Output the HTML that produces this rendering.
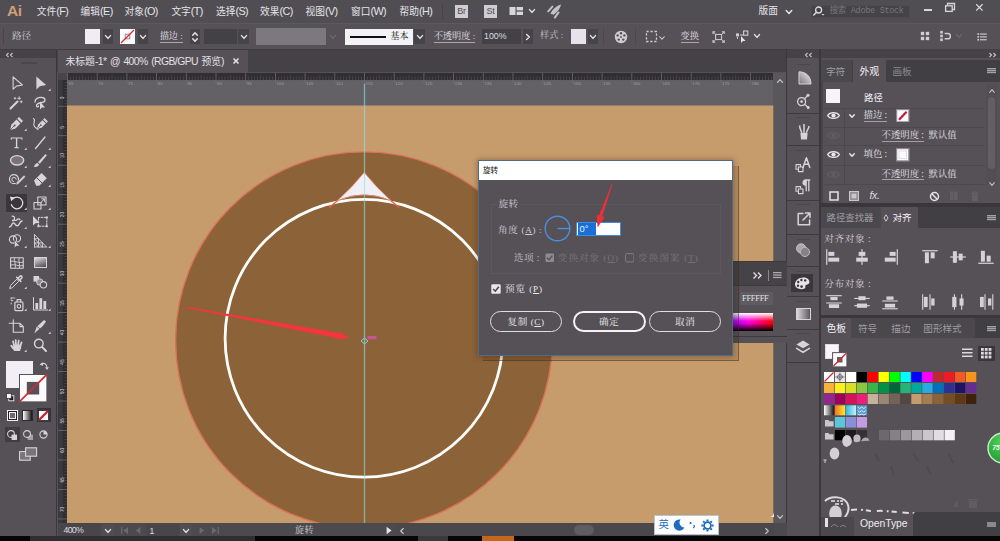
<!DOCTYPE html>
<html lang="zh"><head><meta charset="utf-8"><title>Adobe Illustrator - 旋转</title>
<style>
html,body{margin:0;padding:0;background:#000;}
#app{position:relative;width:1000px;height:541px;overflow:hidden;background:#565157;font-family:"Liberation Sans","Noto Sans CJK SC",sans-serif;}
#app div,#app svg{position:absolute;box-sizing:border-box;}
#app .t{white-space:nowrap;line-height:1.2;}
#app .ss{font-family:"Liberation Sans","Noto Sans CJK SC",sans-serif;}
#app .sf{font-family:"Liberation Serif","Noto Serif CJK SC",serif;}
</style></head>
<body>
<div id="app">
<div style="left:0px;top:0px;width:1000px;height:24px;background:#504e53;"></div>
<div style="left:0px;top:23px;width:1000px;height:26.2px;background:#565157;border-top:1px solid #5b595e;"></div>
<div style="left:0px;top:49.3px;width:1000px;height:23.2px;background:#444246;"></div>
<div style="left:0px;top:49.3px;width:1000px;height:0.8px;background:#3e3c40;"></div>
<div style="left:0px;top:50px;width:57px;height:486px;background:#565157;"></div>
<div style="left:0px;top:50px;width:57px;height:8px;background:#454348;"></div>
<div style="left:56.3px;top:50px;width:1.2px;height:486px;background:#3a383c;"></div>
<div style="left:57.7px;top:50px;width:190px;height:22.5px;background:#565157;"></div>
<div style="left:57.5px;top:72.5px;width:715px;height:7.3px;background:#302e32;"></div>
<div style="left:66.6px;top:79.8px;width:707px;height:443px;background:#636166;"></div>
<div style="left:57.5px;top:72.5px;width:9.1px;height:450.5px;background:#3b393d;"></div>
<div style="left:62.6px;top:79.8px;width:4px;height:443px;background:#2e2c30;"></div>
<div style="left:57.5px;top:72.5px;width:9.1px;height:7.3px;background:#47454a;"></div>
<div style="left:773.3px;top:72.5px;width:13.5px;height:463.5px;background:#59575c;"></div>
<div style="left:787px;top:49.3px;width:32px;height:486.7px;background:#565157;"></div>
<div style="left:786px;top:49.3px;width:1px;height:486.7px;background:#3a383c;"></div>
<div style="left:787px;top:49.3px;width:32px;height:8.7px;background:#454348;"></div>
<div style="left:819px;top:49.3px;width:2px;height:486.7px;background:#3a383c;"></div>
<div style="left:821px;top:49.3px;width:179px;height:486.7px;background:#565157;"></div>
<div style="left:821px;top:49.3px;width:179px;height:8.7px;background:#454348;"></div>
<div style="left:58px;top:523px;width:729px;height:13px;background:#565157;"></div>
<div style="left:0px;top:536px;width:1000px;height:5px;background:#0a0a0a;"></div>
<svg style="left:67px;top:83px;" width="707" height="440" viewBox="0 0 707 440"><rect x="-0.4" y="22.5" width="706.7" height="417.5" fill="#c79c6d"/><circle cx="297" cy="257.3" r="188.4" fill="#8c6238" stroke="#dc7256" stroke-width="1.4"/><circle cx="297" cy="255.3" r="138.9" fill="none" stroke="#fffefb" stroke-width="2.8"/><path d="M297.2 89.5 Q285.0 104.7 270.4 117.7 Q297.2 106.0 324.0 117.7 Q309.4 104.7 297.2 89.5Z" fill="#f1eff6" stroke="#e98a72" stroke-width="0.9"/><path d="M270.4 117.7 L262.2 124.5 M324.0 117.7 L332.2 124.5" stroke="#e8604a" stroke-width="1.4"/><line x1="297.5" y1="0" x2="297.5" y2="440" stroke="#8fe3e6" stroke-width="1.3" opacity="0.6"/><path d="M118.6 223.6 L271.5 249.8 L271.75 248.5 L282.8 254.6 L270.25 256.5 L270.5 255.2 L118.4 224.7Z" fill="#f2363b"/><path d="M294 258 l3.5 -3 l3.5 3 l-3.5 3z" fill="none" stroke="#7fd6d8" stroke-width="1"/><rect x="300.5" y="253" width="9" height="3.4" fill="#e052b8" opacity="0.7"/></svg>
<div class="t ss" style="left:7px;top:0.4px;font-size:15.5px;color:#cf9f7a;font-weight:bold;letter-spacing:-0.5px;line-height:21px;">Ai</div>
<div class="t ss" style="left:36.8px;top:4px;font-size:9.7px;color:#e6e4e9;line-height:14px;">文件<span style="font-size:10.8px;letter-spacing:-0.55px;">(F)</span></div>
<div class="t ss" style="left:80.6px;top:4px;font-size:9.7px;color:#e6e4e9;line-height:14px;">编辑<span style="font-size:10.8px;letter-spacing:-0.55px;">(E)</span></div>
<div class="t ss" style="left:124.5px;top:4px;font-size:9.7px;color:#e6e4e9;line-height:14px;">对象<span style="font-size:10.8px;letter-spacing:-0.55px;">(O)</span></div>
<div class="t ss" style="left:171.4px;top:4px;font-size:9.7px;color:#e6e4e9;line-height:14px;">文字<span style="font-size:10.8px;letter-spacing:-0.55px;">(T)</span></div>
<div class="t ss" style="left:216px;top:4px;font-size:9.7px;color:#e6e4e9;line-height:14px;">选择<span style="font-size:10.8px;letter-spacing:-0.55px;">(S)</span></div>
<div class="t ss" style="left:260px;top:4px;font-size:9.7px;color:#e6e4e9;line-height:14px;">效果<span style="font-size:10.8px;letter-spacing:-0.55px;">(C)</span></div>
<div class="t ss" style="left:305.5px;top:4px;font-size:9.7px;color:#e6e4e9;line-height:14px;">视图<span style="font-size:10.8px;letter-spacing:-0.55px;">(V)</span></div>
<div class="t ss" style="left:351px;top:4px;font-size:9.7px;color:#e6e4e9;line-height:14px;">窗口<span style="font-size:10.8px;letter-spacing:-0.55px;">(W)</span></div>
<div class="t ss" style="left:399.5px;top:4px;font-size:9.7px;color:#e6e4e9;line-height:14px;">帮助<span style="font-size:10.8px;letter-spacing:-0.55px;">(H)</span></div>
<div style="left:442px;top:4px;width:1px;height:15px;background:#454348;"></div>
<div style="left:455px;top:5px;width:13px;height:13px;background:#cfcdd2;color:#504e53;font-size:9px;text-align:center;line-height:13.5px;letter-spacing:-0.2px;">Br</div>
<div style="left:484px;top:5px;width:13px;height:13px;background:#cfcdd2;color:#504e53;font-size:9px;text-align:center;line-height:13.5px;letter-spacing:-0.2px;">St</div>
<svg style="left:508.5px;top:5.5px;" width="15" height="10" viewBox="0 0 15 10"><rect x="0.5" y="1" width="6" height="8" fill="#d8d6db"/><rect x="7.6" y="1" width="6.4" height="3.4" fill="#d8d6db"/><rect x="7.6" y="5.6" width="6.4" height="3.4" fill="#d8d6db"/></svg>
<svg style="left:523.7px;top:2.6999999999999993px" width="16" height="16" viewBox="-8 -8 16 16"><path d="M-2.5 -1.4 L0 1.4 L2.5 -1.4" fill="none" stroke="#e6e6e6" stroke-width="1.4" stroke-linecap="round" stroke-linejoin="round"/></svg>
<svg style="left:546px;top:3px;" width="18" height="17" viewBox="0 0 18 17"><path d="M15.2 1.4 C12 2 8.6 4.4 6.2 7.6 L4.4 10.8 L7.6 11.8 C10.6 9.6 13.6 6.4 15.2 1.4Z" fill="#c3c1c6"/><path d="M6.4 3.6 L2.2 8.4 M12.6 9.4 L8.8 14.6" stroke="#c3c1c6" stroke-width="1.9" stroke-linecap="round"/></svg>
<div class="t ss" style="left:758.5px;top:4px;font-size:9.7px;color:#e6e4e9;line-height:14px;">版面</div>
<svg style="left:780.5px;top:4px" width="16" height="16" viewBox="-8 -8 16 16"><path d="M-2.75 -1.5 L0 1.5 L2.75 -1.5" fill="none" stroke="#e6e6e6" stroke-width="1.4" stroke-linecap="round" stroke-linejoin="round"/></svg>
<div style="left:810.5px;top:4.5px;width:99.5px;height:13.5px;background:#454348;border:1px solid #4d4b50;"></div>
<svg style="left:812px;top:5px;" width="14" height="12" viewBox="0 0 14 12"><circle cx="6.6" cy="5" r="3" fill="none" stroke="#dcdce0" stroke-width="1.3"/><path d="M4.4 7.3 L1.8 10" stroke="#dcdce0" stroke-width="1.5" stroke-linecap="round"/><path d="M9.5 9 l3 0 l-1.5 1.6z" fill="#dcdce0"/></svg>
<div class="t ss" style="left:829.5px;top:6px;font-size:8.6px;color:#78767b;font-family:'Liberation Mono','Noto Sans CJK SC',monospace;letter-spacing:-0.35px;">搜索 Adobe Stock</div>
<div style="left:924px;top:9px;width:8px;height:2px;background:#d8d6db;"></div>
<svg style="left:944px;top:2px;" width="12" height="12" viewBox="0 0 12 12"><path d="M3.5 3.5 V1.5 H10.5 V7.5 H8.5" fill="none" stroke="#d8d6db" stroke-width="1.3"/><rect x="1.6" y="3.8" width="6.6" height="5.6" fill="none" stroke="#d8d6db" stroke-width="1.3"/></svg>
<svg style="left:974px;top:2px;" width="11" height="11" viewBox="0 0 11 11"><path d="M2.2 2.2 L8.6 8.6 M8.6 2.2 L2.2 8.6" stroke="#d8d6db" stroke-width="1.3"/></svg>
<div style="left:3px;top:28px;width:1px;height:16px;background:#47454a;"></div>
<div class="t sf" style="left:12px;top:30px;font-size:9.6px;color:#cccacf;--sw:24;">路径</div>
<div style="left:85px;top:29px;width:15px;height:15px;background:#efecf3;"></div>
<div style="left:103px;top:29px;width:10px;height:15px;background:#464449;"></div>
<svg style="left:100px;top:29px" width="16" height="16" viewBox="-8 -8 16 16"><path d="M-2.5 -1.4 L0 1.4 L2.5 -1.4" fill="none" stroke="#e6e6e6" stroke-width="1.4" stroke-linecap="round" stroke-linejoin="round"/></svg>
<svg style="left:119.5px;top:29px;" width="15" height="15" viewBox="0 0 15 15"><rect width="15" height="15" fill="#fbfafc"/><rect x="5.2" y="5.2" width="4.6" height="4.6" fill="none" stroke="#8a7f88" stroke-width="0.9"/><path d="M1 14 L14 1" stroke="#d8282c" stroke-width="1.3"/></svg>
<div style="left:138px;top:29px;width:10px;height:15px;background:#464449;"></div>
<svg style="left:135px;top:29px" width="16" height="16" viewBox="-8 -8 16 16"><path d="M-2.5 -1.4 L0 1.4 L2.5 -1.4" fill="none" stroke="#e6e6e6" stroke-width="1.4" stroke-linecap="round" stroke-linejoin="round"/></svg>
<div class="t sf" style="left:159.7px;top:30.5px;font-size:9.2px;color:#e2e0e5;--sw:30;border-bottom:1px solid #a9a7ac;line-height:11px;">描边 :</div>
<div style="left:190px;top:29px;width:10px;height:15px;background:#464449;"></div>
<svg style="left:187px;top:25.5px" width="16" height="16" viewBox="-8 -8 16 16"><path d="M-2.3 1.3 L0 -1.3 L2.3 1.3" fill="none" stroke="#e6e6e6" stroke-width="1.4" stroke-linecap="round" stroke-linejoin="round"/></svg>
<svg style="left:187px;top:32px" width="16" height="16" viewBox="-8 -8 16 16"><path d="M-2.3 -1.3 L0 1.3 L2.3 -1.3" fill="none" stroke="#e6e6e6" stroke-width="1.4" stroke-linecap="round" stroke-linejoin="round"/></svg>
<div style="left:204px;top:29px;width:32.5px;height:15px;background:#434146;"></div>
<div style="left:238px;top:29px;width:11px;height:15px;background:#464449;"></div>
<svg style="left:235.5px;top:29px" width="16" height="16" viewBox="-8 -8 16 16"><path d="M-2.5 -1.4 L0 1.4 L2.5 -1.4" fill="none" stroke="#e6e6e6" stroke-width="1.4" stroke-linecap="round" stroke-linejoin="round"/></svg>
<div style="left:256px;top:28px;width:70px;height:17px;background:#7b797f;"></div>
<svg style="left:325px;top:29px" width="16" height="16" viewBox="-8 -8 16 16"><path d="M-2.5 -1.4 L0 1.4 L2.5 -1.4" fill="none" stroke="#6a686d" stroke-width="1.4" stroke-linecap="round" stroke-linejoin="round"/></svg>
<div style="left:345px;top:28.5px;width:68px;height:16px;background:#f3f2f5;"></div>
<div style="left:350px;top:36.3px;width:36px;height:2px;background:#111;"></div>
<div class="t sf" style="left:390.5px;top:31px;font-size:9px;color:#111;--sw:25;">基本</div>
<div style="left:414px;top:29px;width:11px;height:15px;background:#464449;"></div>
<svg style="left:412px;top:29px" width="16" height="16" viewBox="-8 -8 16 16"><path d="M-2.5 -1.4 L0 1.4 L2.5 -1.4" fill="none" stroke="#e6e6e6" stroke-width="1.4" stroke-linecap="round" stroke-linejoin="round"/></svg>
<div class="t sf" style="left:433.7px;top:30.5px;font-size:9.2px;color:#e2e0e5;--sw:30;border-bottom:1px solid #a9a7ac;line-height:11px;">不透明度 :</div>
<div style="left:482px;top:29px;width:39px;height:15px;background:#434146;"></div>
<div class="t ss" style="left:484px;top:30.5px;font-size:8.8px;color:#dedde1;">100%</div>
<div style="left:523px;top:29px;width:10px;height:15px;background:#464449;"></div>
<svg style="left:520px;top:29px" width="16" height="16" viewBox="-8 -8 16 16"><path d="M-1.4 -2.5 L1.4 0 L-1.4 2.5" fill="none" stroke="#e6e6e6" stroke-width="1.4" stroke-linecap="round" stroke-linejoin="round"/></svg>
<div class="t sf" style="left:540px;top:30px;font-size:9.2px;color:#c3c1c6;--sw:15;">样式 :</div>
<div style="left:571px;top:29px;width:15px;height:15px;background:#e7e3ec;"></div>
<div style="left:588px;top:29px;width:10px;height:15px;background:#464449;"></div>
<svg style="left:585px;top:29px" width="16" height="16" viewBox="-8 -8 16 16"><path d="M-2.5 -1.4 L0 1.4 L2.5 -1.4" fill="none" stroke="#e6e6e6" stroke-width="1.4" stroke-linecap="round" stroke-linejoin="round"/></svg>
<div style="left:603px;top:28px;width:1px;height:17px;background:#4b494e;"></div>
<svg style="left:613px;top:29px;" width="16" height="16" viewBox="0 0 16 16"><circle cx="8" cy="8" r="6.2" fill="#cfcdd2"/><g fill="#565157"><circle cx="8" cy="4.2" r="1.2"/><circle cx="11.4" cy="6.4" r="1.2"/><circle cx="10.3" cy="10.6" r="1.2"/><circle cx="5.7" cy="10.6" r="1.2"/><circle cx="4.6" cy="6.4" r="1.2"/><circle cx="8" cy="8" r="0.9"/></g></svg>
<div style="left:635px;top:28px;width:1px;height:17px;background:#4b494e;"></div>
<svg style="left:645px;top:30px;" width="14" height="14" viewBox="0 0 14 14"><rect x="1.5" y="1.5" width="10" height="10" fill="none" stroke="#cfcdd2" stroke-width="1.3" stroke-dasharray="2.2 1.8"/></svg>
<svg style="left:653.5px;top:30px" width="16" height="16" viewBox="-8 -8 16 16"><path d="M-2.25 -1.25 L0 1.25 L2.25 -1.25" fill="none" stroke="#cfcdd2" stroke-width="1.1" stroke-linecap="round" stroke-linejoin="round"/></svg>
<div class="t sf" style="left:680.5px;top:31px;font-size:9.2px;color:#e2e0e5;--sw:30;border-bottom:1px solid #a9a7ac;line-height:11px;">变换</div>
<svg style="left:711.5px;top:30.5px;" width="13.2" height="12" viewBox="0 0 15 14"><rect x="4" y="4" width="7" height="6" fill="none" stroke="#cfcdd2" stroke-width="1.2"/><path d="M1 3.5 V1 H3.5 M11.5 1 H14 V3.5 M14 10.5 V13 H11.5 M3.5 13 H1 V10.5" fill="none" stroke="#cfcdd2" stroke-width="1.3"/><path d="M1 1 L4 4 M14 1 L11 4 M14 13 L11 10 M1 13 L4 10" stroke="#cfcdd2" stroke-width="1"/></svg>
<svg style="left:735px;top:30px;" width="14" height="14" viewBox="0 0 14 14"><rect x="1" y="3.4" width="3" height="3" fill="#cfcdd2"/><rect x="8.6" y="1" width="4.2" height="4.2" fill="none" stroke="#cfcdd2" stroke-width="1.1"/><path d="M5 5 H8.5 M2.5 7 V9" stroke="#cfcdd2" stroke-width="1"/><path d="M6 6 L6 13 L8 11 L10.6 11Z" fill="#e4e2e7"/></svg>
<svg style="left:749px;top:28px" width="16" height="16" viewBox="-8 -8 16 16"><path d="M-2.5 -1.4 L0 1.4 L2.5 -1.4" fill="none" stroke="#e6e6e6" stroke-width="1.4" stroke-linecap="round" stroke-linejoin="round"/></svg>
<svg style="left:919.6px;top:31.2px;" width="10" height="10" viewBox="0 0 12 12"><g fill="#cfcdd2"><rect x="1" y="1" width="4" height="4"/><rect x="7" y="1" width="4" height="4"/><rect x="1" y="7" width="4" height="4"/><rect x="7" y="7" width="4" height="4"/></g></svg>
<svg style="left:938.6px;top:30px;" width="13" height="12" viewBox="0 0 14 13.6"><g fill="#cfcdd2"><rect x="1" y="1" width="3" height="3"/><rect x="1" y="5.3" width="3" height="3"/><rect x="1" y="9.6" width="3" height="3"/></g><path d="M6 4 H9.5 A3 3 0 0 1 9.5 10 H6" fill="none" stroke="#cfcdd2" stroke-width="1.6"/></svg>
<svg style="left:950.8px;top:28px" width="16" height="16" viewBox="-8 -8 16 16"><path d="M-2.5 -1.4 L0 1.4 L2.5 -1.4" fill="none" stroke="#6a686d" stroke-width="1.4" stroke-linecap="round" stroke-linejoin="round"/></svg>
<svg style="left:976.8px;top:32px;" width="10.6" height="9.8" viewBox="0 0 13 12"><g fill="#cfcdd2"><rect x="0.5" y="1.5" width="2" height="2"/><rect x="0.5" y="5" width="2" height="2"/><rect x="0.5" y="8.5" width="2" height="2"/><rect x="3.6" y="1.8" width="8.4" height="1.4"/><rect x="3.6" y="5.3" width="8.4" height="1.4"/><rect x="3.6" y="8.8" width="8.4" height="1.4"/></g></svg>
<div class="t ss" style="left:65.5px;top:55.3px;font-size:9.8px;color:#e2e0e5;line-height:14px;">未标题<span style="font-size:10.4px;letter-spacing:-0.58px;word-spacing:1.2px;">-1* @ 400% (RGB/GPU </span>预览<span style="font-size:10.4px;letter-spacing:-0.58px;word-spacing:1.2px;">)</span></div>
<svg style="left:232px;top:57px;" width="8" height="8" viewBox="0 0 8 8"><path d="M1.5 1.5 L6.5 6.5 M6.5 1.5 L1.5 6.5" stroke="#e6e4e9" stroke-width="1.5"/></svg>
<svg style="left:3.5px;top:51.8px;" width="12" height="6" viewBox="0 0 12 6"><path d="M4.5 1 L2.5 3 L4.5 5 M8.5 1 L6.5 3 L8.5 5" fill="none" stroke="#c8c6cb" stroke-width="1.1"/></svg>
<div style="left:21px;top:62px;width:16px;height:2px;background:#49474c;"></div>
<svg style="left:803px;top:51.5px;" width="12" height="6" viewBox="0 0 12 6"><path d="M4.5 1 L2.5 3 L4.5 5 M8.5 1 L6.5 3 L8.5 5" fill="none" stroke="#c8c6cb" stroke-width="1.1"/></svg>
<svg style="left:986px;top:51.5px;" width="12" height="6" viewBox="0 0 12 6"><path d="M3.5 1 L5.5 3 L3.5 5 M7.5 1 L9.5 3 L7.5 5" fill="none" stroke="#c8c6cb" stroke-width="1.1"/></svg>
<div style="left:5.5px;top:194px;width:21px;height:18px;background:#39373b;border-radius:1px;"></div>
<svg style="left:5.0px;top:72.5px" width="22" height="22" viewBox="-11.0 -11.0 22 22" fill="none" stroke="#d6d4d9" stroke-width="1.2" stroke-linejoin="round" stroke-linecap="round"><path d="M-2.9 -7.2 L-2.9 5.2 L0.4 2.1 L6.4 1Z" stroke-width="1.1"/></svg>
<svg style="left:29.0px;top:72.5px" width="22" height="22" viewBox="-11.0 -11.0 22 22" fill="none" stroke="#d6d4d9" stroke-width="1.2" stroke-linejoin="round" stroke-linecap="round"><path d="M-3.6 -7.6 L-3.6 5.6 L-0.2 2.2 L6.2 1Z" fill="#d6d4d9" stroke="none"/><path d="M10.6 4.6 V6.9 H8.3Z" fill="#d6d4d9" stroke="none"/></svg>
<svg style="left:5.0px;top:91.5px" width="22" height="22" viewBox="-11.0 -11.0 22 22" fill="none" stroke="#d6d4d9" stroke-width="1.2" stroke-linejoin="round" stroke-linecap="round"><path d="M-5.5 5.5 L1.5 -1.5" stroke-width="2"/><path d="M3.2 -6.2 v3 M1.7 -4.7 h3 M5.2 -2.2 v2 M4.2 -1.2 h2 M-1 -5.5 v1.6 M-1.8 -4.7 h1.6" stroke-width="0.9"/></svg>
<svg style="left:29.0px;top:91.5px" width="22" height="22" viewBox="-11.0 -11.0 22 22" fill="none" stroke="#d6d4d9" stroke-width="1.2" stroke-linejoin="round" stroke-linecap="round"><path d="M-5 -1 C-5 -5 -1 -6 2 -5.5 C6 -5 6 -1 2 -0.5 C-1 0 -4 1 -3.5 3 C-3 4.5 -1.5 4 -1.5 2.8" stroke-width="1.3"/><path d="M0 -1.5 L0 6.5 L2 4.6 L5 4.6Z" fill="#d6d4d9" stroke="none"/></svg>
<svg style="left:5.0px;top:112.5px" width="22" height="22" viewBox="-11.0 -11.0 22 22" fill="none" stroke="#d6d4d9" stroke-width="1.2" stroke-linejoin="round" stroke-linecap="round"><path d="M-6 6 L-4.5 0.5 L0.5 -4.5 L4.5 -0.5 L-0.5 4.5Z" fill="#d6d4d9" stroke="none"/><path d="M1.3 -5.3 L3 -7 L7 -3 L5.3 -1.3Z" fill="#d6d4d9" stroke="none"/><circle cx="-1.4" cy="1.4" r="1" fill="#565157" stroke="none"/><path d="M-6 6 L-2 2" stroke="#565157" stroke-width="0.8"/><path d="M10.6 4.6 V6.9 H8.3Z" fill="#d6d4d9" stroke="none"/></svg>
<svg style="left:29.0px;top:112.5px" width="22" height="22" viewBox="-11.0 -11.0 22 22" fill="none" stroke="#d6d4d9" stroke-width="1.2" stroke-linejoin="round" stroke-linecap="round"><g transform="translate(2 0) scale(0.85)"><path d="M-6 6 L-4.5 0.5 L0.5 -4.5 L4.5 -0.5 L-0.5 4.5Z" fill="#d6d4d9" stroke="none"/><path d="M1.3 -5.3 L3 -7 L7 -3 L5.3 -1.3Z" fill="#d6d4d9" stroke="none"/><circle cx="-1.4" cy="1.4" r="1" fill="#565157" stroke="none"/><path d="M-6 6 L-2 2" stroke="#565157" stroke-width="0.8"/></g><path d="M-6.5 -5.5 C-3.5 -4 -8 0 -5.5 2.5 C-4.5 4 -3 4.5 -2 5.5" stroke-width="1.1"/></svg>
<svg style="left:5.0px;top:131.5px" width="22" height="22" viewBox="-11.0 -11.0 22 22" fill="none" stroke="#d6d4d9" stroke-width="1.2" stroke-linejoin="round" stroke-linecap="round"><path d="M-5.2 -5.6 H6.4 V-3.2 H5.6 L5.2 -4.5 H1.3 V4 L3 4.4 V5.2 H-1.8 V4.4 L-0.1 4 V-4.5 H-4 L-4.4 -3.2 H-5.2Z" fill="#d6d4d9" stroke="none"/><path d="M10.6 4.6 V6.9 H8.3Z" fill="#d6d4d9" stroke="none"/></svg>
<svg style="left:29.0px;top:131.5px" width="22" height="22" viewBox="-11.0 -11.0 22 22" fill="none" stroke="#d6d4d9" stroke-width="1.2" stroke-linejoin="round" stroke-linecap="round"><path d="M-4.5 5.5 L5 -6" stroke-width="1.3"/><path d="M10.6 4.6 V6.9 H8.3Z" fill="#d6d4d9" stroke="none"/></svg>
<svg style="left:5.0px;top:150.0px" width="22" height="22" viewBox="-11.0 -11.0 22 22" fill="none" stroke="#d6d4d9" stroke-width="1.2" stroke-linejoin="round" stroke-linecap="round"><ellipse cx="1.1" cy="-0.7" rx="6.6" ry="4.7" fill="#7d7176" stroke="#d6d4d9" stroke-width="1.4"/><path d="M10.6 4.6 V6.9 H8.3Z" fill="#d6d4d9" stroke="none"/></svg>
<svg style="left:29.0px;top:150.0px" width="22" height="22" viewBox="-11.0 -11.0 22 22" fill="none" stroke="#d6d4d9" stroke-width="1.2" stroke-linejoin="round" stroke-linecap="round"><path d="M5.5 -7 L6.8 -5.8 L-0.2 2.8 L-2 1.2Z" fill="#d6d4d9" stroke="none"/><path d="M-2.6 2 L-0.9 3.6 C-1.5 6 -4.5 6.3 -6.5 5.6 C-5 4.8 -5.2 2.5 -2.6 2Z" fill="#d6d4d9" stroke="none"/><path d="M10.6 4.6 V6.9 H8.3Z" fill="#d6d4d9" stroke="none"/></svg>
<svg style="left:5.0px;top:169.0px" width="22" height="22" viewBox="-11.0 -11.0 22 22" fill="none" stroke="#d6d4d9" stroke-width="1.2" stroke-linejoin="round" stroke-linecap="round"><circle cx="-2" cy="-0.8" r="4.5" stroke-width="1.2"/><path d="M-2.4 1.6 A2.2 2.2 0 1 1 0.2 -0.8" stroke-width="1"/><path d="M-0.2 5 L0.8 2.4 L8 -4.8 L9.6 -3.2 L2.4 4Z" fill="#d6d4d9" stroke="#565157" stroke-width="0.5"/><path d="M10.6 4.6 V6.9 H8.3Z" fill="#d6d4d9" stroke="none"/></svg>
<svg style="left:29.0px;top:169.0px" width="22" height="22" viewBox="-11.0 -11.0 22 22" fill="none" stroke="#d6d4d9" stroke-width="1.2" stroke-linejoin="round" stroke-linecap="round"><path d="M-6 0.6 L1.6 -7 L6.8 -1.8 L-0.8 5.8 L-3.8 5.8Z" fill="#d6d4d9" stroke="none"/><path d="M-3.2 -2.2 L2 3" stroke="#565157" stroke-width="1"/><path d="M10.6 4.6 V6.9 H8.3Z" fill="#d6d4d9" stroke="none"/></svg>
<svg style="left:5.0px;top:192.3px" width="22" height="22" viewBox="-11.0 -11.0 22 22" fill="none" stroke="#d6d4d9" stroke-width="1.2" stroke-linejoin="round" stroke-linecap="round"><path d="M-3.4 -3.9 A5.8 5.8 0 1 1 -4.6 1.7" stroke-width="1.25" stroke="#dedce1"/><path d="M-6 -6.4 L-1.4 -5.4 L-4.8 -1.8Z" fill="#dedce1" stroke="none"/><path d="M10.6 4.6 V6.9 H8.3Z" fill="#d6d4d9" stroke="none"/></svg>
<svg style="left:29.0px;top:192.3px" width="22" height="22" viewBox="-11.0 -11.0 22 22" fill="none" stroke="#d6d4d9" stroke-width="1.2" stroke-linejoin="round" stroke-linecap="round"><rect x="-6" y="-0.5" width="7" height="6.5" stroke-width="1.1"/><rect x="-2.2" y="-6" width="8.2" height="8" stroke-width="1.1"/><path d="M0.5 0 L4.2 -4 M4.4 -1.6 V-4.2 H1.8" stroke-width="1"/><path d="M10.6 4.6 V6.9 H8.3Z" fill="#d6d4d9" stroke="none"/></svg>
<svg style="left:5.0px;top:210.5px" width="22" height="22" viewBox="-11.0 -11.0 22 22" fill="none" stroke="#d6d4d9" stroke-width="1.2" stroke-linejoin="round" stroke-linecap="round"><path d="M-6.5 5 C-4 5 -4.5 1 -2.5 1 C-0.5 1 -1 3.8 1.2 3.8 C3.6 3.8 3 -0.5 6 -1" stroke-width="1.4"/><path d="M-3.8 -5.8 C-2 -6 -1 -4.5 -1.6 -3 C-2.2 -1.5 -0.5 -1 0.8 -2.2 C2 -3.3 3.2 -3.4 4 -2.2" stroke-width="1.2"/><circle cx="-3" cy="-1.5" r="1" fill="#d6d4d9" stroke="none"/><path d="M10.6 4.6 V6.9 H8.3Z" fill="#d6d4d9" stroke="none"/></svg>
<svg style="left:29.0px;top:210.5px" width="22" height="22" viewBox="-11.0 -11.0 22 22" fill="none" stroke="#d6d4d9" stroke-width="1.2" stroke-linejoin="round" stroke-linecap="round"><rect x="-1.6" y="-4.6" width="8.4" height="8.8" stroke-width="1" stroke-dasharray="1.6 1.3"/><g fill="#d6d4d9" stroke="none"><rect x="5.8" y="-5.6" width="2" height="2"/><rect x="-2.6" y="3.2" width="2" height="2"/><rect x="5.8" y="3.2" width="2" height="2"/><path d="M-7 -6 L-7 3.6 L-4.4 1.2 L-0.4 0.8Z"/></g></svg>
<svg style="left:5.0px;top:230.4px" width="22" height="22" viewBox="-11.0 -11.0 22 22" fill="none" stroke="#d6d4d9" stroke-width="1.2" stroke-linejoin="round" stroke-linecap="round"><circle cx="-3" cy="-1.5" r="3.6" stroke-width="1.1"/><circle cx="1" cy="-2.6" r="3.6" stroke-width="1.1"/><path d="M-1.5 -0.5 L-1.5 6.8 L0.5 5 L3.6 5Z" fill="#d6d4d9" stroke="#565157" stroke-width="0.5"/><path d="M10.6 4.6 V6.9 H8.3Z" fill="#d6d4d9" stroke="none"/></svg>
<svg style="left:29.0px;top:230.4px" width="22" height="22" viewBox="-11.0 -11.0 22 22" fill="none" stroke="#d6d4d9" stroke-width="1.2" stroke-linejoin="round" stroke-linecap="round"><path d="M-5.5 -6.5 V6 M-5.5 -6.5 L6.5 6 M-5.5 6 H6.5 M-5.5 -2.3 L2.4 6 M-5.5 1.8 L-1.6 6 M-1.5 -2.3 V6 M2.4 1.8 V6 M-5.5 1.9 H2.4 M-5.5 -2.3 H-1.5" stroke-width="0.9"/><path d="M10.6 4.6 V6.9 H8.3Z" fill="#d6d4d9" stroke="none"/></svg>
<svg style="left:5.0px;top:252.5px" width="22" height="22" viewBox="-11.0 -11.0 22 22" fill="none" stroke="#d6d4d9" stroke-width="1.2" stroke-linejoin="round" stroke-linecap="round"><rect x="-5.4" y="-6.2" width="12.6" height="10.4" stroke-width="1.1"/><path d="M-5.4 -2.6 C-2 -4 3 0 7.2 -2 M-5.4 1 C-2 -0.6 2.5 3 7.2 1.6 M-1.4 -6.2 C-3 -3 1 0.6 -1 4.2 M3.2 -6.2 C1.6 -3 4.8 0.6 3.4 4.2" stroke-width="0.9"/></svg>
<div style="left:33.8px;top:257.2px;width:13.3px;height:10.6px;border:1px solid #d6d4d9;background:linear-gradient(160deg,#dcdadf,#4a474c);"></div>
<svg style="left:5.0px;top:271.4px" width="22" height="22" viewBox="-11.0 -11.0 22 22" fill="none" stroke="#d6d4d9" stroke-width="1.2" stroke-linejoin="round" stroke-linecap="round"><path d="M-6.2 6.2 L-5.4 3.4 L0.8 -2.8 L2.8 -0.8 L-3.4 5.4Z" stroke-width="1"/><path d="M0.6 -4.8 L4.8 -0.6 M1.8 -3.6 L4 -5.8 C5 -6.8 6.8 -5 5.8 -4 L3.6 -1.8" stroke-width="1.5"/><path d="M10.6 4.6 V6.9 H8.3Z" fill="#d6d4d9" stroke="none"/></svg>
<svg style="left:29.0px;top:271.4px" width="22" height="22" viewBox="-11.0 -11.0 22 22" fill="none" stroke="#d6d4d9" stroke-width="1.2" stroke-linejoin="round" stroke-linecap="round"><rect x="-6.5" y="-6" width="5.6" height="5.6" fill="#d6d4d9" stroke="none"/><circle cx="-0.2" cy="0" r="3.2" fill="#8f8d92" stroke="#d6d4d9" stroke-width="0.9"/><circle cx="3.4" cy="2.8" r="3.2" fill="#565157" stroke="#d6d4d9" stroke-width="1.1"/></svg>
<svg style="left:5.0px;top:293.4px" width="22" height="22" viewBox="-11.0 -11.0 22 22" fill="none" stroke="#d6d4d9" stroke-width="1.2" stroke-linejoin="round" stroke-linecap="round"><g transform="translate(1.4 0)"><rect x="-2.5" y="-2" width="8" height="8.6" rx="0.8" stroke-width="1.2"/><circle cx="1.5" cy="2.3" r="1.8" stroke-width="1.1"/><path d="M-0.3 -2 V-4.4 H3.4 V-2" stroke-width="1.2"/><path d="M-6.2 -6 h1.6 M-6.2 -3.4 h1.6 M-3.8 -6 h1.2 M-6.2 -6 v1.2 M-6.2 -1 v1" stroke-width="0.9"/></g><path d="M10.6 4.6 V6.9 H8.3Z" fill="#d6d4d9" stroke="none"/></svg>
<svg style="left:29.0px;top:293.4px" width="22" height="22" viewBox="-11.0 -11.0 22 22" fill="none" stroke="#d6d4d9" stroke-width="1.2" stroke-linejoin="round" stroke-linecap="round"><path d="M-6.5 -6.5 V6 H7.5" stroke-width="1"/><g fill="#d6d4d9" stroke="none"><rect x="-4.6" y="-1" width="2.8" height="6"/><rect x="-0.6" y="-5.8" width="2.8" height="10.8"/><rect x="3.4" y="-3" width="2.8" height="8"/></g><path d="M10.6 4.6 V6.9 H8.3Z" fill="#d6d4d9" stroke="none"/></svg>
<svg style="left:5.0px;top:316.0px" width="22" height="22" viewBox="-11.0 -11.0 22 22" fill="none" stroke="#d6d4d9" stroke-width="1.2" stroke-linejoin="round" stroke-linecap="round"><path d="M-2.7 -3.7 H4 L7.3 -0.4 V5.2 H-2.7Z M4 -3.7 V-0.4 H7.3" stroke-width="1.1"/><path d="M-6.8 -3.7 H-2.7 M-2.7 -7.2 V-3.7" stroke-width="1.1"/></svg>
<svg style="left:29.0px;top:316.0px" width="22" height="22" viewBox="-11.0 -11.0 22 22" fill="none" stroke="#d6d4d9" stroke-width="1.2" stroke-linejoin="round" stroke-linecap="round"><path d="M-5.6 6.4 L-3.4 0 L4 -7 L6 -5.4 L2.4 -0.6 L-2.4 3.4Z" fill="#d6d4d9" stroke="none"/><path d="M-2.6 -0.2 L0.2 2" stroke="#565157" stroke-width="0.8"/><path d="M10.6 4.6 V6.9 H8.3Z" fill="#d6d4d9" stroke="none"/></svg>
<svg style="left:5.0px;top:334.0px" width="22" height="22" viewBox="-11.0 -11.0 22 22" fill="none" stroke="#d6d4d9" stroke-width="1.2" stroke-linejoin="round" stroke-linecap="round"><path d="M-1.6 6 C-3.2 4 -5.5 2 -5.6 0.6 C-5.6 -0.5 -4.4 -0.7 -3.6 0.4 L-2.6 1.6 L-2 -0.4 H5.2 V1.6 C5.2 3.8 4.4 4.8 4 6Z" fill="#d6d4d9" stroke="none"/><path d="M-1.9 0.6 L-2.9 -3.6 M0 0 L-0.3 -4.9 M2.1 0.2 L2.7 -4.5 M4.2 1.2 L5.6 -2.6" stroke-width="1.75"/><path d="M10.6 4.6 V6.9 H8.3Z" fill="#d6d4d9" stroke="none"/></svg>
<svg style="left:29.0px;top:334.0px" width="22" height="22" viewBox="-11.0 -11.0 22 22" fill="none" stroke="#d6d4d9" stroke-width="1.2" stroke-linejoin="round" stroke-linecap="round"><circle cx="-1.2" cy="-1.4" r="4.3" stroke-width="1.4"/><path d="M2 1.9 L6 6" stroke-width="2"/></svg>
<div style="left:5.5px;top:361px;width:27.5px;height:27px;background:#f1eef5;"></div>
<svg style="left:19.2px;top:374.1px;" width="29" height="29" viewBox="0 0 29 29"><rect x="0.5" y="0.5" width="27.4" height="27.4" fill="#fbfafc" stroke="#565157" stroke-width="1"/><rect x="7.8" y="7.9" width="12.4" height="12.6" fill="#565157"/><path d="M0 28.2 L28.4 -0.2" stroke="#cf2b33" stroke-width="1.7"/></svg>
<svg style="left:38.5px;top:360.5px;" width="13" height="13" viewBox="0 0 13 13"><g transform="scale(0.82)"><path d="M3 4 C6 1.5 9.5 3.5 9.8 8" fill="none" stroke="#d6d4d9" stroke-width="1.3"/><path d="M0.8 4.4 L4.6 1.4 L4.8 6Z M7.4 7.6 L12 7.6 L9.8 11Z" fill="#d6d4d9"/></g></svg>
<svg style="left:6px;top:393.3px;" width="9" height="9" viewBox="0 0 9 9"><rect x="2.8" y="2.8" width="5" height="5" fill="#1d1c1f" stroke="#f0eef3" stroke-width="0.9"/><rect x="0.5" y="0.5" width="4.8" height="4.8" fill="#f6f5f8" stroke="#2c2a2e" stroke-width="0.7"/></svg>
<svg style="left:6.5px;top:409.5px;" width="11" height="11" viewBox="0 0 11 11"><rect x="0.5" y="0.5" width="10" height="10" fill="#201f22" stroke="#f2f0f5" stroke-width="1"/><rect x="2.5" y="2.5" width="6" height="6" fill="#6c6a6f" stroke="#f2f0f5" stroke-width="1"/></svg>
<div style="left:21.5px;top:409.5px;width:11px;height:11px;border:1px solid #2b292d;background:linear-gradient(90deg,#fff,#111);"></div>
<div style="left:36.5px;top:408px;width:14px;height:14px;background:#38363a;"></div>
<svg style="left:38px;top:409.5px;" width="11" height="11" viewBox="0 0 11 11"><rect x="0.5" y="0.5" width="10" height="10" fill="#fbfafc" stroke="#2b292d" stroke-width="0.8"/><path d="M1 10 L10 1" stroke="#c8202c" stroke-width="2.3"/></svg>
<div style="left:5px;top:427px;width:15px;height:15px;background:#3f3d41;"></div>
<svg style="left:6px;top:428.5px;" width="13" height="13" viewBox="0 0 13 13"><circle cx="5" cy="5" r="3.4" fill="none" stroke="#d6d4d9" stroke-width="1.1"/><rect x="5.6" y="5.6" width="5.4" height="5.4" fill="#d6d4d9"/></svg>
<svg style="left:21.5px;top:428.5px;" width="13" height="13" viewBox="0 0 13 13"><rect x="5.6" y="5.6" width="5.4" height="5.4" fill="#a3a1a6"/><circle cx="5" cy="5" r="3.4" fill="#565157" stroke="#d6d4d9" stroke-width="1.1"/></svg>
<svg style="left:38px;top:428.5px;" width="13" height="13" viewBox="0 0 13 13"><circle cx="5.5" cy="5.5" r="3.6" fill="none" stroke="#d6d4d9" stroke-width="1.1"/><path d="M5.5 5.5 V1.9 A3.6 3.6 0 0 1 9.1 5.5Z" fill="#d6d4d9"/></svg>
<svg style="left:19px;top:447px;" width="19" height="15" viewBox="0 0 19 15"><rect x="0.6" y="4.6" width="10.6" height="8.6" fill="#77757a" stroke="#d6d4d9" stroke-width="1.1"/><rect x="6.6" y="0.8" width="11" height="8.4" fill="#77757a" stroke="#d6d4d9" stroke-width="1.1"/></svg>
<div style="left:787px;top:112.5px;width:32px;height:1.2px;background:#3d3b3f;"></div>
<div style="left:787px;top:145px;width:32px;height:1.2px;background:#3d3b3f;"></div>
<div style="left:787px;top:199.5px;width:32px;height:1.2px;background:#3d3b3f;"></div>
<div style="left:787px;top:234px;width:32px;height:1.2px;background:#3d3b3f;"></div>
<div style="left:787px;top:266px;width:32px;height:1.2px;background:#3d3b3f;"></div>
<div style="left:787px;top:296px;width:32px;height:1.2px;background:#3d3b3f;"></div>
<div style="left:787px;top:328.5px;width:32px;height:1.2px;background:#3d3b3f;"></div>
<div style="left:787px;top:361.5px;width:32px;height:1.2px;background:#3d3b3f;"></div>
<div style="left:797px;top:64px;width:13px;height:1.4px;background:#49474c;"></div>
<div style="left:797px;top:117px;width:13px;height:1.4px;background:#49474c;"></div>
<div style="left:797px;top:150px;width:13px;height:1.4px;background:#49474c;"></div>
<div style="left:797px;top:204px;width:13px;height:1.4px;background:#49474c;"></div>
<div style="left:797px;top:238.5px;width:13px;height:1.4px;background:#49474c;"></div>
<div style="left:797px;top:270.5px;width:13px;height:1.4px;background:#49474c;"></div>
<div style="left:797px;top:300.5px;width:13px;height:1.4px;background:#49474c;"></div>
<div style="left:797px;top:333px;width:13px;height:1.4px;background:#49474c;"></div>
<svg style="left:797.5px;top:71px" width="14" height="14" viewBox="0 0 14 14"><defs><linearGradient id="cg" x1="0" y1="1" x2="1" y2="0"><stop offset="0" stop-color="#77757a"/><stop offset="1" stop-color="#f0eef3"/></linearGradient></defs><path d="M1 0.8 C8 0.8 13 5.5 13 13 H1Z" fill="url(#cg)" stroke="#d6d4d9" stroke-width="1"/></svg>
<svg style="left:794.0px;top:91.5px" width="18" height="18" viewBox="-9.0 -9.0 18 18" fill="none" stroke="#d6d4d9" stroke-width="1.2" stroke-linejoin="round" stroke-linecap="round"><circle cx="-1.4" cy="0.6" r="4" stroke-width="1.3"/><circle cx="-1.4" cy="0.6" r="1.3" fill="#d6d4d9" stroke="none"/><path d="M1.2 -2 L4.6 -5.4 M1.4 3.2 L4.8 6" stroke-width="1.2"/><circle cx="5" cy="-5.8" r="1.5" fill="#d6d4d9" stroke="none"/><circle cx="5.2" cy="6.4" r="1.5" fill="#d6d4d9" stroke="none"/></svg>
<svg style="left:795.0px;top:122.5px" width="18" height="18" viewBox="-9.0 -9.0 18 18" fill="none" stroke="#d6d4d9" stroke-width="1.2" stroke-linejoin="round" stroke-linecap="round"><path d="M-3.6 1 H3.6 L3 7.4 H-3 Z" fill="#d6d4d9" stroke="none"/><path d="M-2.4 0.5 L-4.2 -4.6 M0 0.5 V-6.6 M2.4 0.5 L4.6 -4.2" stroke-width="1.5"/><path d="M-5.4 -6.4 L-3.4 -6.4 L-4 -3.6Z M-0.9 -8 L0.9 -8 L0 -5.4Z M3.8 -6.2 L6 -5.6 L4.8 -3.4Z" fill="#d6d4d9" stroke="none"/></svg>
<svg style="left:794.0px;top:154.5px" width="18" height="18" viewBox="-9.0 -9.0 18 18" fill="none" stroke="#d6d4d9" stroke-width="1.2" stroke-linejoin="round" stroke-linecap="round"><rect x="-7" y="0.6" width="4.6" height="4.6" stroke-width="1.1"/><rect x="-4.6" y="3" width="4.6" height="4.6" fill="#565157" stroke-width="1.1"/><path d="M0 3.4 L3.4 -6.2 L6.8 3.4 M1.4 0.2 H5.4" stroke-width="1.5"/></svg>
<svg style="left:794.0px;top:176.5px" width="18" height="18" viewBox="-9.0 -9.0 18 18" fill="none" stroke="#d6d4d9" stroke-width="1.2" stroke-linejoin="round" stroke-linecap="round"><rect x="-7" y="0.6" width="4.6" height="4.6" stroke-width="1.1"/><rect x="-4.6" y="3" width="4.6" height="4.6" fill="#565157" stroke-width="1.1"/><path d="M3.2 4.8 V-6 M5.8 4.8 V-6 M6.8 -6 H2.6 A2.4 2.4 0 0 0 2.6 -1" stroke-width="1.3"/><path d="M3 -6 A2.5 2.5 0 0 0 3 -1Z" fill="#d6d4d9" stroke="none"/></svg>
<svg style="left:794.5px;top:209.5px" width="18" height="18" viewBox="-9.0 -9.0 18 18" fill="none" stroke="#d6d4d9" stroke-width="1.2" stroke-linejoin="round" stroke-linecap="round"><path d="M-1 -5.6 H-5.8 V5.8 H5.6 V1" stroke-width="1.5"/><path d="M-1 1 L5.8 -5.8 M1.4 -6 H6 V-1.4" stroke-width="1.5"/></svg>
<svg style="left:794.0px;top:241.0px" width="18" height="18" viewBox="-9.0 -9.0 18 18" fill="none" stroke="#d6d4d9" stroke-width="1.2" stroke-linejoin="round" stroke-linecap="round"><circle cx="-1.8" cy="-1.6" r="4.6" fill="#a9a7ac" stroke="#d6d4d9" stroke-width="0.9"/><circle cx="2" cy="2" r="4.6" fill="#858388" stroke="#bcbabf" stroke-width="0.9"/></svg>
<div style="left:791px;top:273.5px;width:21.5px;height:18.5px;background:#39373b;"></div>
<svg style="left:793.0px;top:274.0px" width="18" height="18" viewBox="-9.0 -9.0 18 18" fill="none" stroke="#d6d4d9" stroke-width="1.2" stroke-linejoin="round" stroke-linecap="round"><path d="M-7 1.6 C-7 -2.6 -3 -5.4 1.4 -5.4 C5 -5.4 7.4 -3.4 7.4 -1 C7.4 1.6 4.6 1.2 3.6 2.2 C2.6 3.4 4.2 4.6 2.6 5.6 C-0.6 7 -7 6 -7 1.6Z" fill="#e6e4e9" stroke="none"/><g fill="#39373b" stroke="none"><circle cx="-3.8" cy="-1" r="1.2"/><circle cx="-0.6" cy="-3" r="1.2"/><circle cx="3.2" cy="-2.6" r="1.2"/><circle cx="-4" cy="2.8" r="1.2"/><circle cx="-0.4" cy="3.6" r="1.3"/></g></svg>
<div style="left:796px;top:308px;width:15px;height:12px;border:1.2px solid #d6d4d9;background:linear-gradient(90deg,#dad8dd,#5b595e);"></div>
<svg style="left:794.0px;top:337.5px" width="18" height="18" viewBox="-9.0 -9.0 18 18" fill="none" stroke="#d6d4d9" stroke-width="1.2" stroke-linejoin="round" stroke-linecap="round"><path d="M0 -6.4 L6.6 -2.6 L0 1.2 L-6.6 -2.6Z" fill="#d6d4d9" stroke="none"/><path d="M-6.4 1.4 L0 5.2 L6.4 1.4" stroke-width="1.6"/></svg>
<div style="left:821px;top:59.5px;width:179px;height:22px;background:#413f43;"></div>
<div style="left:821px;top:59.5px;width:31px;height:22px;background:#4a484d;"></div>
<div style="left:853px;top:59.5px;width:33px;height:22px;background:#565157;"></div>
<div class="t ss" style="left:826px;top:66px;font-size:9.6px;color:#9f9da2;">字符</div>
<div class="t ss" style="left:859.5px;top:66px;font-size:9.8px;color:#f4f2f7;--sw:22;">外观</div>
<div class="t ss" style="left:892.5px;top:66px;font-size:9.6px;color:#8b898e;">画板</div>
<svg style="left:987px;top:68px;" width="10" height="6" viewBox="0 0 10 6"><rect x="0" y="0" width="9" height="1.4" fill="#a3a1a6"/><rect x="0" y="1.9" width="9" height="1.4" fill="#a3a1a6"/><rect x="0" y="3.8" width="9" height="1.4" fill="#a3a1a6"/></svg>
<div style="left:821px;top:81.5px;width:179px;height:121px;background:#565157;"></div>
<div style="left:821px;top:81.5px;width:1.5px;height:121px;background:#48464b;"></div>
<div style="left:826px;top:88.5px;width:14px;height:14px;background:#f6f4f9;"></div>
<div class="t ss" style="left:864px;top:91.5px;font-size:9.4px;color:#f1eff4;--sw:30;">路径</div>
<div style="left:823px;top:107.5px;width:162px;height:1px;background:#4b494e;"></div>
<div style="left:823px;top:126.5px;width:162px;height:1px;background:#4b494e;"></div>
<div style="left:823px;top:144.5px;width:162px;height:1px;background:#4b494e;"></div>
<div style="left:823px;top:164.5px;width:162px;height:1px;background:#4b494e;"></div>
<div style="left:823px;top:183.5px;width:162px;height:1px;background:#4b494e;"></div>
<div style="left:843.5px;top:107.5px;width:1px;height:76px;background:#4b494e;"></div>
<svg style="left:826.5px;top:111.0px;" width="13" height="9" viewBox="0 0 13 9"><path d="M0.6 4.5 C3 0.6 10 0.6 12.4 4.5 C10 8.4 3 8.4 0.6 4.5Z" fill="none" stroke="#e9e7ec" stroke-width="1.3"/><circle cx="6.5" cy="4.5" r="2.1" fill="#e9e7ec"/></svg>
<svg style="left:826.5px;top:131.0px;" width="13" height="9" viewBox="0 0 13 9"><path d="M0.6 4.5 C3 0.6 10 0.6 12.4 4.5 C10 8.4 3 8.4 0.6 4.5Z" fill="none" stroke="#5f5d62" stroke-width="1.3"/><circle cx="6.5" cy="4.5" r="2.1" fill="#5f5d62"/></svg>
<svg style="left:826.5px;top:150.0px;" width="13" height="9" viewBox="0 0 13 9"><path d="M0.6 4.5 C3 0.6 10 0.6 12.4 4.5 C10 8.4 3 8.4 0.6 4.5Z" fill="none" stroke="#e9e7ec" stroke-width="1.3"/><circle cx="6.5" cy="4.5" r="2.1" fill="#e9e7ec"/></svg>
<svg style="left:826.5px;top:169.5px;" width="13" height="9" viewBox="0 0 13 9"><path d="M0.6 4.5 C3 0.6 10 0.6 12.4 4.5 C10 8.4 3 8.4 0.6 4.5Z" fill="none" stroke="#5f5d62" stroke-width="1.3"/><circle cx="6.5" cy="4.5" r="2.1" fill="#5f5d62"/></svg>
<svg style="left:844px;top:107.5px" width="16" height="16" viewBox="-8 -8 16 16"><path d="M-2.3 -1.3 L0 1.3 L2.3 -1.3" fill="none" stroke="#e6e6e6" stroke-width="1.4" stroke-linecap="round" stroke-linejoin="round"/></svg>
<svg style="left:844px;top:146.5px" width="16" height="16" viewBox="-8 -8 16 16"><path d="M-2.3 -1.3 L0 1.3 L2.3 -1.3" fill="none" stroke="#e6e6e6" stroke-width="1.4" stroke-linecap="round" stroke-linejoin="round"/></svg>
<div class="t sf" style="left:863.5px;top:110px;font-size:9.4px;color:#e2e0e5;--sw:28;border-bottom:1px solid #a3a1a6;line-height:10.5px;">描边 :</div>
<svg style="left:896px;top:108.5px;" width="13.5" height="13.5" viewBox="0 0 13.5 13.5"><rect x="0.6" y="0.6" width="12.3" height="12.3" fill="#fbfafc" stroke="#8f8d92" stroke-width="1.2"/><path d="M3 10.8 L10.6 2.8" stroke="#c4183c" stroke-width="2.2"/></svg>
<div class="t sf" style="left:881.5px;top:130px;font-size:9.4px;color:#e2e0e5;--sw:28;border-bottom:1px solid #a3a1a6;line-height:10.5px;">不透明度 :</div>
<div class="t sf" style="left:928.5px;top:130px;font-size:9.4px;color:#e2e0e5;--sw:28;">默认值</div>
<div class="t sf" style="left:863.5px;top:149px;font-size:9.4px;color:#e2e0e5;--sw:28;">填色 :</div>
<svg style="left:896px;top:148px;" width="13.5" height="13.5" viewBox="0 0 13.5 13.5"><rect x="0.6" y="0.6" width="12.3" height="12.3" fill="#fbfafc" stroke="#8f8d92" stroke-width="1.2"/><rect x="3" y="3" width="7.5" height="7.5" fill="none" stroke="#d9d7dc" stroke-width="0.8"/></svg>
<div class="t sf" style="left:881.5px;top:168.5px;font-size:9.4px;color:#e2e0e5;--sw:28;border-bottom:1px solid #a3a1a6;line-height:10.5px;">不透明度 :</div>
<div class="t sf" style="left:928.5px;top:168.5px;font-size:9.4px;color:#e2e0e5;--sw:28;">默认值</div>
<div style="left:986px;top:84px;width:11px;height:100px;background:#524e54;"></div>
<div style="left:987.8px;top:97px;width:7.4px;height:72px;background:#625e64;border-radius:4px;"></div>
<svg style="left:983.5px;top:83px" width="16" height="16" viewBox="-8 -8 16 16"><path d="M-2.3 1.3 L0 -1.3 L2.3 1.3" fill="none" stroke="#c3c1c6" stroke-width="1.1" stroke-linecap="round" stroke-linejoin="round"/></svg>
<svg style="left:983.5px;top:176px" width="16" height="16" viewBox="-8 -8 16 16"><path d="M-2.3 -1.3 L0 1.3 L2.3 -1.3" fill="none" stroke="#c3c1c6" stroke-width="1.1" stroke-linecap="round" stroke-linejoin="round"/></svg>
<svg style="left:829px;top:191px;" width="10" height="10" viewBox="0 0 10 10"><rect x="1" y="1" width="8" height="8" fill="none" stroke="#e4e2e7" stroke-width="1.5"/></svg>
<svg style="left:849px;top:191px;" width="10" height="10" viewBox="0 0 10 10"><rect x="0.6" y="0.6" width="8.8" height="8.8" fill="#8b898e" stroke="#d6d4d9" stroke-width="1"/><rect x="2.6" y="2.6" width="4.8" height="4.8" fill="#c9c7cc"/></svg>
<div class="t sf" style="left:869.5px;top:189px;font-size:10.5px;color:#dcdadf;font-style:italic;font-family:'Liberation Sans',sans-serif;letter-spacing:-0.3px;">fx.</div>
<svg style="left:928.5px;top:191px;" width="11" height="11" viewBox="0 0 11 11"><circle cx="5.5" cy="5.5" r="4" fill="none" stroke="#e4e2e7" stroke-width="1.5"/><path d="M2.8 2.8 L8.2 8.2" stroke="#e4e2e7" stroke-width="1.5"/></svg>
<svg style="left:948.5px;top:191px;" width="10" height="10" viewBox="0 0 10 10"><rect x="1" y="0.5" width="3.4" height="4" fill="#626065"/><rect x="5" y="0.5" width="3.6" height="8.5" fill="#626065"/><rect x="1" y="5" width="3.4" height="4" fill="#626065"/></svg>
<svg style="left:969.5px;top:190.5px;" width="10" height="11" viewBox="0 0 10 11"><path d="M1 2.6 H9 M3.4 2.4 V1 H6.6 V2.4" stroke="#626065" stroke-width="1.2" fill="none"/><rect x="2" y="3.6" width="6" height="6.6" fill="#626065"/></svg>
<div style="left:821px;top:202.5px;width:179px;height:4px;background:#39373b;"></div>
<div style="left:821px;top:206.5px;width:179px;height:21px;background:#413f43;"></div>
<div style="left:821px;top:206.5px;width:59.5px;height:21px;background:#4a484d;"></div>
<div style="left:880.5px;top:206.5px;width:37.5px;height:21px;background:#565157;"></div>
<div class="t ss" style="left:826.5px;top:212px;font-size:9.4px;color:#9f9da2;">路径查找器</div>
<svg style="left:883px;top:213.5px;" width="6" height="8" viewBox="0 0 6 8"><path d="M3 0.8 L5 4 L3 7.2 L1 4Z" fill="none" stroke="#d6d4d9" stroke-width="0.9"/></svg>
<div class="t ss" style="left:892.5px;top:212px;font-size:9.6px;color:#f4f2f7;--sw:22;">对齐</div>
<svg style="left:987px;top:215px;" width="10" height="6" viewBox="0 0 10 6"><rect x="0" y="0" width="9" height="1.4" fill="#a3a1a6"/><rect x="0" y="1.9" width="9" height="1.4" fill="#a3a1a6"/><rect x="0" y="3.8" width="9" height="1.4" fill="#a3a1a6"/></svg>
<div style="left:821px;top:227.5px;width:179px;height:87px;background:#565157;"></div>
<div class="t sf" style="left:824.3px;top:233px;font-size:9.6px;color:#d2d0d5;--sw:22;letter-spacing:0.6px;">对齐对象 :</div>
<div class="t sf" style="left:824.3px;top:277.5px;font-size:9.6px;color:#d2d0d5;--sw:22;letter-spacing:0.6px;">分布对象 :</div>
<svg style="left:824.5px;top:249px" width="16" height="16" viewBox="-7.2 -7.2 14.4 14.4" fill="#d4d2d7" stroke="none"><rect x="-6.2" y="-7" width="1.1" height="14"/><rect x="-4.2" y="-4.6" width="5.4" height="3.6"/><rect x="-4.2" y="0.6" width="9.8" height="3.6"/></svg>
<svg style="left:853.5px;top:249px" width="16" height="16" viewBox="-7.2 -7.2 14.4 14.4" fill="#d4d2d7" stroke="none"><rect x="-0.55" y="-7" width="1.1" height="14"/><rect x="-3" y="-4.6" width="6" height="3.6"/><rect x="-5.2" y="0.6" width="10.4" height="3.6"/></svg>
<svg style="left:882.5px;top:249px" width="16" height="16" viewBox="-7.2 -7.2 14.4 14.4" fill="#d4d2d7" stroke="none"><rect x="5.1" y="-7" width="1.1" height="14"/><rect x="-1.2" y="-4.6" width="5.4" height="3.6"/><rect x="-5.6" y="0.6" width="9.8" height="3.6"/></svg>
<svg style="left:921.8px;top:249px" width="16" height="16" viewBox="-7.2 -7.2 14.4 14.4" fill="#d4d2d7" stroke="none"><rect x="-7" y="-6.2" width="14" height="1.1"/><rect x="-4.6" y="-4.2" width="3.6" height="9.8"/><rect x="0.6" y="-4.2" width="3.6" height="5.4"/></svg>
<svg style="left:949.6px;top:249px" width="16" height="16" viewBox="-7.2 -7.2 14.4 14.4" fill="#d4d2d7" stroke="none"><rect x="-7" y="-0.55" width="14" height="1.1"/><rect x="-4.6" y="-5.2" width="3.6" height="10.4"/><rect x="0.6" y="-3" width="3.6" height="6"/></svg>
<svg style="left:977.7px;top:249px" width="16" height="16" viewBox="-7.2 -7.2 14.4 14.4" fill="#d4d2d7" stroke="none"><rect x="-7" y="5.1" width="14" height="1.1"/><rect x="-4.6" y="-5.6" width="3.6" height="9.8"/><rect x="0.6" y="-1.2" width="3.6" height="5.4"/></svg>
<svg style="left:825.5px;top:293.5px" width="16" height="16" viewBox="-7.2 -7.2 14.4 14.4" fill="#d4d2d7" stroke="none"><rect x="-7" y="-6.2" width="14" height="1"/><rect x="-3.2" y="-4.6" width="6.4" height="3"/><rect x="-7" y="0.4" width="14" height="1"/><rect x="-4.6" y="2" width="9.2" height="3.4"/></svg>
<svg style="left:853.5px;top:293.5px" width="16" height="16" viewBox="-7.2 -7.2 14.4 14.4" fill="#d4d2d7" stroke="none"><rect x="-7" y="-3.7" width="14" height="1"/><rect x="-3.2" y="-5.2" width="6.4" height="3.6"/><rect x="-7" y="2.8" width="14" height="1"/><rect x="-4.6" y="1.4" width="9.2" height="3.8"/></svg>
<svg style="left:882px;top:293.5px" width="16" height="16" viewBox="-7.2 -7.2 14.4 14.4" fill="#d4d2d7" stroke="none"><rect x="-7" y="-1.4" width="14" height="1"/><rect x="-3.2" y="-5" width="6.4" height="3"/><rect x="-7" y="5.6" width="14" height="1"/><rect x="-4.6" y="1.6" width="9.2" height="3.4"/></svg>
<svg style="left:921.4px;top:293.5px" width="16" height="16" viewBox="-7.2 -7.2 14.4 14.4" fill="#d4d2d7" stroke="none"><rect x="-6.2" y="-7" width="1" height="14"/><rect x="-4.6" y="-4.6" width="3.4" height="9.2"/><rect x="0.4" y="-7" width="1" height="14"/><rect x="2" y="-3.2" width="3" height="6.4"/></svg>
<svg style="left:949.6px;top:293.5px" width="16" height="16" viewBox="-7.2 -7.2 14.4 14.4" fill="#d4d2d7" stroke="none"><rect x="-3.7" y="-7" width="1" height="14"/><rect x="-5.2" y="-4.6" width="3.8" height="9.2"/><rect x="2.8" y="-7" width="1" height="14"/><rect x="1.4" y="-3.2" width="3.6" height="6.4"/></svg>
<svg style="left:978.3px;top:293.5px" width="16" height="16" viewBox="-7.2 -7.2 14.4 14.4" fill="#d4d2d7" stroke="none"><rect x="-1.4" y="-7" width="1" height="14"/><rect x="-5.4" y="-4.6" width="3.4" height="9.2"/><rect x="5.6" y="-7" width="1" height="14"/><rect x="1.8" y="-3.2" width="3" height="6.4"/></svg>
<div style="left:821px;top:314.5px;width:179px;height:3px;background:#39373b;"></div>
<div style="left:821px;top:317.5px;width:179px;height:20.5px;background:#413f43;"></div>
<div style="left:821px;top:317.5px;width:30px;height:20.5px;background:#565157;"></div>
<div style="left:851px;top:317.5px;width:124px;height:20.5px;background:#4a484d;"></div>
<div class="t ss" style="left:826.5px;top:323px;font-size:9.8px;color:#f4f2f7;--sw:22;">色板</div>
<div class="t ss" style="left:858px;top:323px;font-size:9.6px;color:#9f9da2;">符号</div>
<div class="t ss" style="left:891.3px;top:323px;font-size:9.6px;color:#9f9da2;">描边</div>
<div class="t ss" style="left:923.3px;top:323px;font-size:9.6px;color:#9f9da2;">图形样式</div>
<svg style="left:987px;top:326px;" width="10" height="6" viewBox="0 0 10 6"><rect x="0" y="0" width="9" height="1.4" fill="#a3a1a6"/><rect x="0" y="1.9" width="9" height="1.4" fill="#a3a1a6"/><rect x="0" y="3.8" width="9" height="1.4" fill="#a3a1a6"/></svg>
<div style="left:821px;top:338px;width:179px;height:174px;background:#565157;"></div>
<div style="left:824.5px;top:344px;width:14.5px;height:15px;background:#f6f4f9;border:1px solid #dddbe0;"></div>
<svg style="left:831.5px;top:351.5px;" width="15.5" height="15.5" viewBox="0 0 15.5 15.5"><rect x="0.6" y="0.6" width="14.3" height="14.3" fill="#fbfafc" stroke="#565157" stroke-width="1"/><rect x="5" y="5" width="5.5" height="5.5" fill="#6b5a5e"/><path d="M1.5 14 L14 1.5" stroke="#d12c33" stroke-width="1.4"/></svg>
<svg style="left:962px;top:348px;" width="11" height="10" viewBox="0 0 11 10"><g fill="#dcdadf"><rect x="0" y="0.5" width="10.5" height="1.5"/><rect x="0" y="4" width="10.5" height="1.5"/><rect x="0" y="7.5" width="10.5" height="1.5"/></g></svg>
<div style="left:978px;top:345.5px;width:16.5px;height:15.5px;background:#39373b;"></div>
<svg style="left:981px;top:348px;" width="11" height="11" viewBox="0 0 11 11"><g fill="#dcdadf"><rect x="0.0" y="0.0" width="2.8" height="2.8"/><rect x="0.0" y="3.8" width="2.8" height="2.8"/><rect x="0.0" y="7.6" width="2.8" height="2.8"/><rect x="3.8" y="0.0" width="2.8" height="2.8"/><rect x="3.8" y="3.8" width="2.8" height="2.8"/><rect x="3.8" y="7.6" width="2.8" height="2.8"/><rect x="7.6" y="0.0" width="2.8" height="2.8"/><rect x="7.6" y="3.8" width="2.8" height="2.8"/><rect x="7.6" y="7.6" width="2.8" height="2.8"/></g></svg>
<svg style="left:823.7px;top:371.5px;" width="156" height="72" viewBox="0 0 156 72"><rect x="0.0" y="0" width="10" height="10" fill="#fff"/><path d="M0.5 9.5 L9.5 0.5" stroke="#d12c33" stroke-width="1.3"/><rect x="10.92" y="0" width="10" height="10" fill="#e9e7ec"/><circle cx="15.92" cy="5" r="2.4" fill="none" stroke="#444" stroke-width="0.7"/><path d="M15.92 0.5 v9 M11.42 5 h9" stroke="#444" stroke-width="0.7"/><rect x="21.84" y="0" width="10.3" height="10" fill="#ffffff"/><rect x="32.76" y="0" width="10.3" height="10" fill="#000000"/><rect x="43.68" y="0" width="10.3" height="10" fill="#ff0000"/><rect x="54.6" y="0" width="10.3" height="10" fill="#ffff00"/><rect x="65.52" y="0" width="10.3" height="10" fill="#00ff00"/><rect x="76.44" y="0" width="10.3" height="10" fill="#00ffff"/><rect x="87.36" y="0" width="10.3" height="10" fill="#0000ff"/><rect x="98.28" y="0" width="10.3" height="10" fill="#ff00ff"/><rect x="109.2" y="0" width="10.3" height="10" fill="#c1272d"/><rect x="120.12" y="0" width="10.3" height="10" fill="#ed1c24"/><rect x="131.04" y="0" width="10.3" height="10" fill="#f15a24"/><rect x="141.96" y="0" width="10.3" height="10" fill="#f7931e"/><rect x="0.0" y="11" width="10.3" height="10" fill="#fbb03b"/><rect x="10.92" y="11" width="10.3" height="10" fill="#fcee21"/><rect x="21.84" y="11" width="10.3" height="10" fill="#d9e021"/><rect x="32.76" y="11" width="10.3" height="10" fill="#8cc63f"/><rect x="43.68" y="11" width="10.3" height="10" fill="#39b54a"/><rect x="54.6" y="11" width="10.3" height="10" fill="#009245"/><rect x="65.52" y="11" width="10.3" height="10" fill="#006837"/><rect x="76.44" y="11" width="10.3" height="10" fill="#22b573"/><rect x="87.36" y="11" width="10.3" height="10" fill="#00a99d"/><rect x="98.28" y="11" width="10.3" height="10" fill="#29abe2"/><rect x="109.2" y="11" width="10.3" height="10" fill="#0071bc"/><rect x="120.12" y="11" width="10.3" height="10" fill="#2e3192"/><rect x="131.04" y="11" width="10.3" height="10" fill="#1b1464"/><rect x="141.96" y="11" width="10.3" height="10" fill="#662d91"/><rect x="0.0" y="22" width="10.3" height="10" fill="#93278f"/><rect x="10.92" y="22" width="10.3" height="10" fill="#9e005d"/><rect x="21.84" y="22" width="10.3" height="10" fill="#d4145a"/><rect x="32.76" y="22" width="10.3" height="10" fill="#ed1e79"/><rect x="43.68" y="22" width="10.3" height="10" fill="#c7b299"/><rect x="54.6" y="22" width="10.3" height="10" fill="#998675"/><rect x="65.52" y="22" width="10.3" height="10" fill="#736357"/><rect x="76.44" y="22" width="10.3" height="10" fill="#534741"/><rect x="87.36" y="22" width="10.3" height="10" fill="#c69c6d"/><rect x="98.28" y="22" width="10.3" height="10" fill="#a67c52"/><rect x="109.2" y="22" width="10.3" height="10" fill="#8c6239"/><rect x="120.12" y="22" width="10.3" height="10" fill="#754c24"/><rect x="131.04" y="22" width="10.3" height="10" fill="#603813"/><rect x="141.96" y="22" width="10.3" height="10" fill="#42210b"/><defs><linearGradient id="g1"><stop offset="0" stop-color="#fff"/><stop offset="1" stop-color="#111"/></linearGradient><linearGradient id="g2"><stop offset="0" stop-color="#f7751e"/><stop offset="1" stop-color="#fde92b"/></linearGradient><linearGradient id="g3"><stop offset="0" stop-color="#2db7e6"/><stop offset="1" stop-color="#c6f2fb"/></linearGradient></defs><rect x="0" y="33.3" width="10.3" height="10" fill="url(#g1)"/><rect x="10.92" y="33.3" width="10.3" height="10" fill="url(#g2)"/><rect x="21.84" y="33.3" width="10.3" height="10" fill="url(#g3)"/><rect x="32.76" y="33.3" width="10.3" height="10" fill="#5b9bd0"/><path d="M33.76 35 l2 1.6 l2 -1.6 l2 1.6 l2 -1.6 M33.76 38.5 l2 1.6 l2 -1.6 l2 1.6 l2 -1.6 M33.76 42 l2 1 l2 -1 l2 1 l2 -1" stroke="#d9eefa" stroke-width="1" fill="none"/><path d="M1 48 h3.4 l1 1.2 h4.2 v5.3 h-8.6z" fill="#c9c7cc"/><rect x="10.92" y="45" width="10.3" height="10.6" fill="#5cc6d8"/><rect x="21.84" y="45" width="10.3" height="10.6" fill="#8a90d8"/><rect x="32.76" y="45" width="10.3" height="10.6" fill="#c49ce0"/><path d="M1 61 h3.4 l1 1.2 h4.2 v5.3 h-8.6z" fill="#c9c7cc"/><rect x="10.92" y="58" width="10.3" height="10.3" fill="#000000"/><rect x="21.84" y="58" width="10.3" height="10.3" fill="#1c1b1e"/><rect x="32.76" y="58" width="10.3" height="10.3" fill="#343236"/><rect x="55.0" y="58" width="10.3" height="10.3" fill="#6b696e"/><rect x="65.92" y="58" width="10.3" height="10.3" fill="#838186"/><rect x="76.84" y="58" width="10.3" height="10.3" fill="#9a989d"/><rect x="87.75999999999999" y="58" width="10.3" height="10.3" fill="#b2b0b5"/><rect x="98.68" y="58" width="10.3" height="10.3" fill="#c9c7cc"/><rect x="109.6" y="58" width="10.3" height="10.3" fill="#e0dee3"/><rect x="120.52" y="58" width="10.3" height="10.3" fill="#f3f1f6"/></svg>
<svg style="left:821px;top:425px;" width="179" height="95" viewBox="0 0 179 95"><defs><filter id="bl"><feGaussianBlur stdDeviation="0.6"/></filter>
<clipPath id="sm1"><path d="M0 0 H179 V16 H52 C40 15 30 18 24 24 C18 30 16 34 14 40 L0 40Z"/></clipPath></defs>
<g filter="url(#bl)">
<g clip-path="url(#sm1)">
<ellipse cx="26" cy="16" rx="4.8" ry="6" fill="#d2d0d5"/>
<ellipse cx="13.5" cy="28.5" rx="4.8" ry="6" fill="#d2d0d5"/>
<ellipse cx="44.5" cy="17.5" rx="4.4" ry="5" fill="#a9a7ac"/><ellipse cx="36" cy="13.5" rx="3.6" ry="4" fill="#bdbbc0"/>
</g>
<path d="M2.5 35 h3 M4 35 v3" stroke="#cfcdd2" stroke-width="1"/>
<path d="M54 28 l4 8 M92 28 l5 8 M128 29 l4 9 M70 41 l3 9 M106 42 l4 8" stroke="#4d494e" stroke-width="2" opacity="0.8"/>
<ellipse cx="14.5" cy="88.5" rx="6.3" ry="8" fill="#d2d0d5"/>
<path d="M4 76 C10 70 24 71 27 80 C29 86 25 92 21 95" stroke="#dcdadf" stroke-width="2" fill="none"/>
<path d="M10 76 h12 M14 79 h8" stroke="#e6e4e9" stroke-width="1.6" stroke-dasharray="4 2 2 1"/>
<path d="M30 85 C40 83 48 87 56 86 C66 85 80 89 104 88" stroke="#dddbe0" stroke-width="2" fill="none" stroke-dasharray="6 4 2 3 5 6"/>
</g></svg>
<svg style="left:984px;top:430px;" width="16" height="36" viewBox="0 0 16 36"><defs><radialGradient id="gb" cx="0.45" cy="0.3" r="0.8"><stop offset="0" stop-color="#4fd05a"/><stop offset="1" stop-color="#1c962c"/></radialGradient></defs><circle cx="19" cy="18" r="15" fill="url(#gb)" stroke="#cfeccf" stroke-width="1.4"/><text x="8.5" y="19.5" font-family="Liberation Sans" font-size="6.5" font-weight="bold" font-style="italic" fill="#f4fff4">75</text></svg>
<svg style="left:967px;top:497px;" width="12" height="12" viewBox="0 0 12 12"><rect x="2" y="4" width="8" height="7" fill="#5f5d62"/><rect x="1" y="2" width="10" height="1.4" fill="#5f5d62"/></svg>
<svg style="left:952px;top:498px;" width="8" height="10" viewBox="0 0 8 10"><path d="M2 9 L5 1 L6 9Z" fill="#5f5d62"/></svg>
<div style="left:912.5px;top:511.5px;width:88px;height:25px;background:#413f43;border-top-left-radius:4px;"></div>
<div style="left:821px;top:516.5px;width:33px;height:20px;background:#4a484d;"></div>
<div style="left:854px;top:516.5px;width:58.5px;height:20px;background:#565157;"></div>
<div class="t ss" style="left:860px;top:518px;font-size:10.4px;color:#ecebf0;letter-spacing:-0.05px;">OpenType</div>
<svg style="left:987px;top:521.5px;" width="10" height="6" viewBox="0 0 10 6"><rect width="9" height="5" fill="#8b898e"/></svg>
<svg style="left:823px;top:517px;" width="30" height="14" viewBox="0 0 30 14"><rect x="2" y="1" width="3" height="9" fill="#e2e0e5"/><path d="M8 10 c2 -3 5 -3 7 0 M17 10 c2 -2 4 -2 6 0" stroke="#8b898e" stroke-width="1" fill="none"/></svg>
<div style="left:731px;top:261px;width:56px;height:82px;background:#3c3a3e;"></div>
<div style="left:732px;top:262px;width:54.5px;height:23px;background:#454348;"></div>
<svg style="left:752px;top:271px;" width="12" height="9" viewBox="0 0 12 9"><path d="M1.5 1.5 L4.5 4.5 L1.5 7.5 M6 1.5 L9 4.5 L6 7.5" fill="none" stroke="#e6e4e9" stroke-width="1.3"/></svg>
<div style="left:767.5px;top:270px;width:1px;height:11px;background:#8b898e;"></div>
<svg style="left:773px;top:272px;" width="9" height="7" viewBox="0 0 9 7"><rect y="0" width="8.5" height="1.3" fill="#a9a7ac"/><rect y="2.4" width="8.5" height="1.3" fill="#a9a7ac"/><rect y="4.8" width="8.5" height="1.3" fill="#a9a7ac"/></svg>
<div style="left:732px;top:285.5px;width:54.5px;height:50.3px;background:#565157;"></div>
<div style="left:740px;top:291.5px;width:32.5px;height:13.5px;background:#5e5c61;"></div>
<div class="t sf" style="left:742px;top:293.5px;font-size:8.3px;color:#e4e2e7;letter-spacing:-0.2px;">FFFFFF</div>
<div style="left:732px;top:312.5px;width:40.5px;height:18.5px;background:linear-gradient(180deg,rgba(255,255,255,1) 0%,rgba(255,255,255,0) 45%,rgba(0,0,0,0) 55%,rgba(0,0,0,1) 100%),linear-gradient(90deg,#a300ff 0%,#ff00e0 40%,#ff0060 75%,#ff0000 100%);"></div>
<div style="left:732px;top:337px;width:54.5px;height:5.5px;background:#565157;"></div>
<div style="left:483px;top:166px;width:255.8px;height:194.5px;background:rgba(45,25,5,0.14);border-right:1px solid rgba(80,45,20,0.5);border-bottom:1px solid rgba(80,45,20,0.5);"></div>
<div style="left:477.5px;top:160.2px;width:255.5px;height:195.6px;background:#565157;border:1.3px solid #526b84;box-shadow:0 0 5px 1px rgba(60,40,20,0.35);"></div>
<div style="left:478.5px;top:161.2px;width:253.5px;height:18.5px;background:#ffffff;"></div>
<div class="t ss" style="left:483px;top:166px;font-size:7.6px;color:#111;">旋转</div>
<div style="left:490.5px;top:203.5px;width:230px;height:70.5px;border:1px solid #5b595e;"></div>
<div class="t sf" style="left:496.5px;top:197.8px;font-size:9.6px;color:#cfcdd2;--sw:18;background:#565157;padding:0 2px;letter-spacing:0.5px;">旋转</div>
<div class="t sf" style="left:498px;top:223.5px;font-size:9.6px;color:#d2d0d5;--sw:18;letter-spacing:0.7px;">角度<span style="font-size:9px;"> (<u>A</u>) :</span></div>
<svg style="left:543px;top:214px;" width="29" height="29" viewBox="0 0 29 29"><circle cx="14.5" cy="14.5" r="12.3" fill="none" stroke="#4a90dc" stroke-width="1.4"/><path d="M14.5 14.5 H26.5" stroke="#4a90dc" stroke-width="1.4"/></svg>
<div style="left:576px;top:221.5px;width:45.2px;height:14.6px;background:#ffffff;border:1px solid #3f8ae0;"></div>
<div style="left:577.5px;top:223px;width:18.8px;height:11.6px;background:#1a6fd6;"></div>
<div class="t ss" style="left:579.5px;top:223.3px;font-size:9.4px;color:#e8f1ff;">0°</div>
<div class="t sf" style="left:514px;top:252px;font-size:9.6px;color:#c3c1c6;--sw:18;letter-spacing:0.4px;">选项 :</div>
<svg style="left:544.5px;top:253px;" width="9.5" height="9.5" viewBox="0 0 9.5 9.5"><rect x="0.5" y="0.5" width="8.5" height="8.5" rx="1" fill="#8d8b90"/><path d="M2 4.8 L4 6.8 L7.4 2.6" stroke="#565157" stroke-width="1.4" fill="none"/></svg>
<div class="t sf" style="left:557.8px;top:252px;font-size:9.6px;color:#76747a;letter-spacing:1px;">变换对象<span style="font-size:9px;"> (<u>O</u>)</span></div>
<svg style="left:624.5px;top:253px;" width="9.5" height="9.5" viewBox="0 0 9.5 9.5"><rect x="0.6" y="0.6" width="8.3" height="8.3" rx="1" fill="none" stroke="#7d7b80" stroke-width="1"/></svg>
<div class="t sf" style="left:638px;top:252px;font-size:9.6px;color:#76747a;letter-spacing:1.1px;">变换图案<span style="font-size:9px;"> (<u>T</u>)</span></div>
<svg style="left:491px;top:283.5px;" width="10" height="10" viewBox="0 0 10 10"><rect x="0.3" y="0.3" width="9.4" height="9.4" rx="1.3" fill="#e9e7ec"/><path d="M2.2 5 L4.3 7.2 L7.8 2.8" stroke="#434146" stroke-width="1.5" fill="none"/></svg>
<div class="t sf" style="left:505px;top:282.5px;font-size:9.6px;color:#eceaef;--sw:25;letter-spacing:0.9px;">预览<span style="font-size:9px;"> (<u>P</u>)</span></div>
<div style="left:489.5px;top:311px;width:72px;height:21px;border:1.1px solid #e0dee3;border-radius:11px;"></div>
<div style="left:572.5px;top:311px;width:73.5px;height:21px;border:2px solid #f4f2f7;border-radius:11px;"></div>
<div style="left:649px;top:311px;width:72px;height:21px;border:1.1px solid #e0dee3;border-radius:11px;"></div>
<div class="t sf" style="left:507.5px;top:316.3px;font-size:9.6px;color:#eceaef;--sw:25;letter-spacing:0.6px;">复制<span style="font-size:9px;"> (<u>C</u>)</span></div>
<div class="t sf" style="left:599px;top:316.3px;font-size:9.6px;color:#eceaef;--sw:25;letter-spacing:0.6px;">确定</div>
<div class="t sf" style="left:675px;top:316.3px;font-size:9.6px;color:#eceaef;--sw:25;letter-spacing:0.6px;">取消</div>
<svg style="left:590px;top:180px;" width="30" height="52" viewBox="0 0 30 52"><path d="M22.6 4 L12.2 36.5 L14.6 37 L7.6 47.5 L6.6 35 L9 35.6 L21.8 4Z" fill="#ee2f35"/></svg>
<svg style="left:57.5px;top:72.5px;" width="715" height="13" viewBox="0 0 715 13"><rect x="9.1" y="0" width="0.8" height="11" fill="#6d6b70"/><rect x="12.1" y="3.5" width="0.8" height="3.8" fill="#4b494e"/><rect x="15.0" y="3.5" width="0.8" height="3.8" fill="#4b494e"/><rect x="18.0" y="3.5" width="0.8" height="3.8" fill="#4b494e"/><rect x="21.0" y="3.5" width="0.8" height="3.8" fill="#4b494e"/><rect x="23.9" y="2" width="0.8" height="5.3" fill="#4b494e"/><rect x="26.9" y="3.5" width="0.8" height="3.8" fill="#4b494e"/><rect x="29.9" y="3.5" width="0.8" height="3.8" fill="#4b494e"/><rect x="32.9" y="3.5" width="0.8" height="3.8" fill="#4b494e"/><rect x="35.8" y="3.5" width="0.8" height="3.8" fill="#4b494e"/><text x="10.6" y="11.6" font-family="Liberation Sans" font-size="4.4" fill="#9f9da2">65</text><rect x="38.8" y="0" width="0.8" height="11" fill="#6d6b70"/><rect x="41.8" y="3.5" width="0.8" height="3.8" fill="#4b494e"/><rect x="44.7" y="3.5" width="0.8" height="3.8" fill="#4b494e"/><rect x="47.7" y="3.5" width="0.8" height="3.8" fill="#4b494e"/><rect x="50.7" y="3.5" width="0.8" height="3.8" fill="#4b494e"/><rect x="53.6" y="2" width="0.8" height="5.3" fill="#4b494e"/><rect x="56.6" y="3.5" width="0.8" height="3.8" fill="#4b494e"/><rect x="59.6" y="3.5" width="0.8" height="3.8" fill="#4b494e"/><rect x="62.6" y="3.5" width="0.8" height="3.8" fill="#4b494e"/><rect x="65.5" y="3.5" width="0.8" height="3.8" fill="#4b494e"/><text x="40.3" y="11.6" font-family="Liberation Sans" font-size="4.4" fill="#9f9da2">70</text><rect x="68.5" y="0" width="0.8" height="11" fill="#6d6b70"/><rect x="71.5" y="3.5" width="0.8" height="3.8" fill="#4b494e"/><rect x="74.4" y="3.5" width="0.8" height="3.8" fill="#4b494e"/><rect x="77.4" y="3.5" width="0.8" height="3.8" fill="#4b494e"/><rect x="80.4" y="3.5" width="0.8" height="3.8" fill="#4b494e"/><rect x="83.3" y="2" width="0.8" height="5.3" fill="#4b494e"/><rect x="86.3" y="3.5" width="0.8" height="3.8" fill="#4b494e"/><rect x="89.3" y="3.5" width="0.8" height="3.8" fill="#4b494e"/><rect x="92.3" y="3.5" width="0.8" height="3.8" fill="#4b494e"/><rect x="95.2" y="3.5" width="0.8" height="3.8" fill="#4b494e"/><text x="70.0" y="11.6" font-family="Liberation Sans" font-size="4.4" fill="#9f9da2">75</text><rect x="98.2" y="0" width="0.8" height="11" fill="#6d6b70"/><rect x="101.2" y="3.5" width="0.8" height="3.8" fill="#4b494e"/><rect x="104.1" y="3.5" width="0.8" height="3.8" fill="#4b494e"/><rect x="107.1" y="3.5" width="0.8" height="3.8" fill="#4b494e"/><rect x="110.1" y="3.5" width="0.8" height="3.8" fill="#4b494e"/><rect x="113.0" y="2" width="0.8" height="5.3" fill="#4b494e"/><rect x="116.0" y="3.5" width="0.8" height="3.8" fill="#4b494e"/><rect x="119.0" y="3.5" width="0.8" height="3.8" fill="#4b494e"/><rect x="122.0" y="3.5" width="0.8" height="3.8" fill="#4b494e"/><rect x="124.9" y="3.5" width="0.8" height="3.8" fill="#4b494e"/><text x="99.7" y="11.6" font-family="Liberation Sans" font-size="4.4" fill="#9f9da2">80</text><rect x="127.9" y="0" width="0.8" height="11" fill="#6d6b70"/><rect x="130.9" y="3.5" width="0.8" height="3.8" fill="#4b494e"/><rect x="133.8" y="3.5" width="0.8" height="3.8" fill="#4b494e"/><rect x="136.8" y="3.5" width="0.8" height="3.8" fill="#4b494e"/><rect x="139.8" y="3.5" width="0.8" height="3.8" fill="#4b494e"/><rect x="142.7" y="2" width="0.8" height="5.3" fill="#4b494e"/><rect x="145.7" y="3.5" width="0.8" height="3.8" fill="#4b494e"/><rect x="148.7" y="3.5" width="0.8" height="3.8" fill="#4b494e"/><rect x="151.7" y="3.5" width="0.8" height="3.8" fill="#4b494e"/><rect x="154.6" y="3.5" width="0.8" height="3.8" fill="#4b494e"/><text x="129.4" y="11.6" font-family="Liberation Sans" font-size="4.4" fill="#9f9da2">85</text><rect x="157.6" y="0" width="0.8" height="11" fill="#6d6b70"/><rect x="160.6" y="3.5" width="0.8" height="3.8" fill="#4b494e"/><rect x="163.5" y="3.5" width="0.8" height="3.8" fill="#4b494e"/><rect x="166.5" y="3.5" width="0.8" height="3.8" fill="#4b494e"/><rect x="169.5" y="3.5" width="0.8" height="3.8" fill="#4b494e"/><rect x="172.4" y="2" width="0.8" height="5.3" fill="#4b494e"/><rect x="175.4" y="3.5" width="0.8" height="3.8" fill="#4b494e"/><rect x="178.4" y="3.5" width="0.8" height="3.8" fill="#4b494e"/><rect x="181.4" y="3.5" width="0.8" height="3.8" fill="#4b494e"/><rect x="184.3" y="3.5" width="0.8" height="3.8" fill="#4b494e"/><text x="159.1" y="11.6" font-family="Liberation Sans" font-size="4.4" fill="#9f9da2">90</text><rect x="187.3" y="0" width="0.8" height="11" fill="#6d6b70"/><rect x="190.3" y="3.5" width="0.8" height="3.8" fill="#4b494e"/><rect x="193.2" y="3.5" width="0.8" height="3.8" fill="#4b494e"/><rect x="196.2" y="3.5" width="0.8" height="3.8" fill="#4b494e"/><rect x="199.2" y="3.5" width="0.8" height="3.8" fill="#4b494e"/><rect x="202.1" y="2" width="0.8" height="5.3" fill="#4b494e"/><rect x="205.1" y="3.5" width="0.8" height="3.8" fill="#4b494e"/><rect x="208.1" y="3.5" width="0.8" height="3.8" fill="#4b494e"/><rect x="211.1" y="3.5" width="0.8" height="3.8" fill="#4b494e"/><rect x="214.0" y="3.5" width="0.8" height="3.8" fill="#4b494e"/><text x="188.8" y="11.6" font-family="Liberation Sans" font-size="4.4" fill="#9f9da2">95</text><rect x="217.0" y="0" width="0.8" height="11" fill="#6d6b70"/><rect x="220.0" y="3.5" width="0.8" height="3.8" fill="#4b494e"/><rect x="222.9" y="3.5" width="0.8" height="3.8" fill="#4b494e"/><rect x="225.9" y="3.5" width="0.8" height="3.8" fill="#4b494e"/><rect x="228.9" y="3.5" width="0.8" height="3.8" fill="#4b494e"/><rect x="231.8" y="2" width="0.8" height="5.3" fill="#4b494e"/><rect x="234.8" y="3.5" width="0.8" height="3.8" fill="#4b494e"/><rect x="237.8" y="3.5" width="0.8" height="3.8" fill="#4b494e"/><rect x="240.8" y="3.5" width="0.8" height="3.8" fill="#4b494e"/><rect x="243.7" y="3.5" width="0.8" height="3.8" fill="#4b494e"/><text x="218.5" y="11.6" font-family="Liberation Sans" font-size="4.4" fill="#9f9da2">100</text><rect x="246.7" y="0" width="0.8" height="11" fill="#6d6b70"/><rect x="249.7" y="3.5" width="0.8" height="3.8" fill="#4b494e"/><rect x="252.6" y="3.5" width="0.8" height="3.8" fill="#4b494e"/><rect x="255.6" y="3.5" width="0.8" height="3.8" fill="#4b494e"/><rect x="258.6" y="3.5" width="0.8" height="3.8" fill="#4b494e"/><rect x="261.5" y="2" width="0.8" height="5.3" fill="#4b494e"/><rect x="264.5" y="3.5" width="0.8" height="3.8" fill="#4b494e"/><rect x="267.5" y="3.5" width="0.8" height="3.8" fill="#4b494e"/><rect x="270.5" y="3.5" width="0.8" height="3.8" fill="#4b494e"/><rect x="273.4" y="3.5" width="0.8" height="3.8" fill="#4b494e"/><text x="248.2" y="11.6" font-family="Liberation Sans" font-size="4.4" fill="#9f9da2">105</text><rect x="276.4" y="0" width="0.8" height="11" fill="#6d6b70"/><rect x="279.4" y="3.5" width="0.8" height="3.8" fill="#4b494e"/><rect x="282.3" y="3.5" width="0.8" height="3.8" fill="#4b494e"/><rect x="285.3" y="3.5" width="0.8" height="3.8" fill="#4b494e"/><rect x="288.3" y="3.5" width="0.8" height="3.8" fill="#4b494e"/><rect x="291.2" y="2" width="0.8" height="5.3" fill="#4b494e"/><rect x="294.2" y="3.5" width="0.8" height="3.8" fill="#4b494e"/><rect x="297.2" y="3.5" width="0.8" height="3.8" fill="#4b494e"/><rect x="300.2" y="3.5" width="0.8" height="3.8" fill="#4b494e"/><rect x="303.1" y="3.5" width="0.8" height="3.8" fill="#4b494e"/><text x="277.9" y="11.6" font-family="Liberation Sans" font-size="4.4" fill="#9f9da2">110</text><rect x="306.1" y="0" width="0.8" height="11" fill="#6d6b70"/><rect x="309.1" y="3.5" width="0.8" height="3.8" fill="#4b494e"/><rect x="312.0" y="3.5" width="0.8" height="3.8" fill="#4b494e"/><rect x="315.0" y="3.5" width="0.8" height="3.8" fill="#4b494e"/><rect x="318.0" y="3.5" width="0.8" height="3.8" fill="#4b494e"/><rect x="320.9" y="2" width="0.8" height="5.3" fill="#4b494e"/><rect x="323.9" y="3.5" width="0.8" height="3.8" fill="#4b494e"/><rect x="326.9" y="3.5" width="0.8" height="3.8" fill="#4b494e"/><rect x="329.9" y="3.5" width="0.8" height="3.8" fill="#4b494e"/><rect x="332.8" y="3.5" width="0.8" height="3.8" fill="#4b494e"/><text x="307.6" y="11.6" font-family="Liberation Sans" font-size="4.4" fill="#9f9da2">115</text><rect x="335.8" y="0" width="0.8" height="11" fill="#6d6b70"/><rect x="338.8" y="3.5" width="0.8" height="3.8" fill="#4b494e"/><rect x="341.7" y="3.5" width="0.8" height="3.8" fill="#4b494e"/><rect x="344.7" y="3.5" width="0.8" height="3.8" fill="#4b494e"/><rect x="347.7" y="3.5" width="0.8" height="3.8" fill="#4b494e"/><rect x="350.6" y="2" width="0.8" height="5.3" fill="#4b494e"/><rect x="353.6" y="3.5" width="0.8" height="3.8" fill="#4b494e"/><rect x="356.6" y="3.5" width="0.8" height="3.8" fill="#4b494e"/><rect x="359.6" y="3.5" width="0.8" height="3.8" fill="#4b494e"/><rect x="362.5" y="3.5" width="0.8" height="3.8" fill="#4b494e"/><text x="337.3" y="11.6" font-family="Liberation Sans" font-size="4.4" fill="#9f9da2">120</text><rect x="365.5" y="0" width="0.8" height="11" fill="#6d6b70"/><rect x="368.5" y="3.5" width="0.8" height="3.8" fill="#4b494e"/><rect x="371.4" y="3.5" width="0.8" height="3.8" fill="#4b494e"/><rect x="374.4" y="3.5" width="0.8" height="3.8" fill="#4b494e"/><rect x="377.4" y="3.5" width="0.8" height="3.8" fill="#4b494e"/><rect x="380.3" y="2" width="0.8" height="5.3" fill="#4b494e"/><rect x="383.3" y="3.5" width="0.8" height="3.8" fill="#4b494e"/><rect x="386.3" y="3.5" width="0.8" height="3.8" fill="#4b494e"/><rect x="389.3" y="3.5" width="0.8" height="3.8" fill="#4b494e"/><rect x="392.2" y="3.5" width="0.8" height="3.8" fill="#4b494e"/><text x="367.0" y="11.6" font-family="Liberation Sans" font-size="4.4" fill="#9f9da2">125</text><rect x="395.2" y="0" width="0.8" height="11" fill="#6d6b70"/><rect x="398.2" y="3.5" width="0.8" height="3.8" fill="#4b494e"/><rect x="401.1" y="3.5" width="0.8" height="3.8" fill="#4b494e"/><rect x="404.1" y="3.5" width="0.8" height="3.8" fill="#4b494e"/><rect x="407.1" y="3.5" width="0.8" height="3.8" fill="#4b494e"/><rect x="410.0" y="2" width="0.8" height="5.3" fill="#4b494e"/><rect x="413.0" y="3.5" width="0.8" height="3.8" fill="#4b494e"/><rect x="416.0" y="3.5" width="0.8" height="3.8" fill="#4b494e"/><rect x="419.0" y="3.5" width="0.8" height="3.8" fill="#4b494e"/><rect x="421.9" y="3.5" width="0.8" height="3.8" fill="#4b494e"/><text x="396.7" y="11.6" font-family="Liberation Sans" font-size="4.4" fill="#9f9da2">130</text><rect x="424.9" y="0" width="0.8" height="11" fill="#6d6b70"/><rect x="427.9" y="3.5" width="0.8" height="3.8" fill="#4b494e"/><rect x="430.8" y="3.5" width="0.8" height="3.8" fill="#4b494e"/><rect x="433.8" y="3.5" width="0.8" height="3.8" fill="#4b494e"/><rect x="436.8" y="3.5" width="0.8" height="3.8" fill="#4b494e"/><rect x="439.7" y="2" width="0.8" height="5.3" fill="#4b494e"/><rect x="442.7" y="3.5" width="0.8" height="3.8" fill="#4b494e"/><rect x="445.7" y="3.5" width="0.8" height="3.8" fill="#4b494e"/><rect x="448.7" y="3.5" width="0.8" height="3.8" fill="#4b494e"/><rect x="451.6" y="3.5" width="0.8" height="3.8" fill="#4b494e"/><text x="426.4" y="11.6" font-family="Liberation Sans" font-size="4.4" fill="#9f9da2">135</text><rect x="454.6" y="0" width="0.8" height="11" fill="#6d6b70"/><rect x="457.6" y="3.5" width="0.8" height="3.8" fill="#4b494e"/><rect x="460.5" y="3.5" width="0.8" height="3.8" fill="#4b494e"/><rect x="463.5" y="3.5" width="0.8" height="3.8" fill="#4b494e"/><rect x="466.5" y="3.5" width="0.8" height="3.8" fill="#4b494e"/><rect x="469.4" y="2" width="0.8" height="5.3" fill="#4b494e"/><rect x="472.4" y="3.5" width="0.8" height="3.8" fill="#4b494e"/><rect x="475.4" y="3.5" width="0.8" height="3.8" fill="#4b494e"/><rect x="478.4" y="3.5" width="0.8" height="3.8" fill="#4b494e"/><rect x="481.3" y="3.5" width="0.8" height="3.8" fill="#4b494e"/><text x="456.1" y="11.6" font-family="Liberation Sans" font-size="4.4" fill="#9f9da2">140</text><rect x="484.3" y="0" width="0.8" height="11" fill="#6d6b70"/><rect x="487.3" y="3.5" width="0.8" height="3.8" fill="#4b494e"/><rect x="490.2" y="3.5" width="0.8" height="3.8" fill="#4b494e"/><rect x="493.2" y="3.5" width="0.8" height="3.8" fill="#4b494e"/><rect x="496.2" y="3.5" width="0.8" height="3.8" fill="#4b494e"/><rect x="499.1" y="2" width="0.8" height="5.3" fill="#4b494e"/><rect x="502.1" y="3.5" width="0.8" height="3.8" fill="#4b494e"/><rect x="505.1" y="3.5" width="0.8" height="3.8" fill="#4b494e"/><rect x="508.1" y="3.5" width="0.8" height="3.8" fill="#4b494e"/><rect x="511.0" y="3.5" width="0.8" height="3.8" fill="#4b494e"/><text x="485.8" y="11.6" font-family="Liberation Sans" font-size="4.4" fill="#9f9da2">145</text><rect x="514.0" y="0" width="0.8" height="11" fill="#6d6b70"/><rect x="517.0" y="3.5" width="0.8" height="3.8" fill="#4b494e"/><rect x="519.9" y="3.5" width="0.8" height="3.8" fill="#4b494e"/><rect x="522.9" y="3.5" width="0.8" height="3.8" fill="#4b494e"/><rect x="525.9" y="3.5" width="0.8" height="3.8" fill="#4b494e"/><rect x="528.9" y="2" width="0.8" height="5.3" fill="#4b494e"/><rect x="531.8" y="3.5" width="0.8" height="3.8" fill="#4b494e"/><rect x="534.8" y="3.5" width="0.8" height="3.8" fill="#4b494e"/><rect x="537.8" y="3.5" width="0.8" height="3.8" fill="#4b494e"/><rect x="540.7" y="3.5" width="0.8" height="3.8" fill="#4b494e"/><text x="515.5" y="11.6" font-family="Liberation Sans" font-size="4.4" fill="#9f9da2">150</text><rect x="543.7" y="0" width="0.8" height="11" fill="#6d6b70"/><rect x="546.7" y="3.5" width="0.8" height="3.8" fill="#4b494e"/><rect x="549.6" y="3.5" width="0.8" height="3.8" fill="#4b494e"/><rect x="552.6" y="3.5" width="0.8" height="3.8" fill="#4b494e"/><rect x="555.6" y="3.5" width="0.8" height="3.8" fill="#4b494e"/><rect x="558.6" y="2" width="0.8" height="5.3" fill="#4b494e"/><rect x="561.5" y="3.5" width="0.8" height="3.8" fill="#4b494e"/><rect x="564.5" y="3.5" width="0.8" height="3.8" fill="#4b494e"/><rect x="567.5" y="3.5" width="0.8" height="3.8" fill="#4b494e"/><rect x="570.4" y="3.5" width="0.8" height="3.8" fill="#4b494e"/><text x="545.2" y="11.6" font-family="Liberation Sans" font-size="4.4" fill="#9f9da2">155</text><rect x="573.4" y="0" width="0.8" height="11" fill="#6d6b70"/><rect x="576.4" y="3.5" width="0.8" height="3.8" fill="#4b494e"/><rect x="579.3" y="3.5" width="0.8" height="3.8" fill="#4b494e"/><rect x="582.3" y="3.5" width="0.8" height="3.8" fill="#4b494e"/><rect x="585.3" y="3.5" width="0.8" height="3.8" fill="#4b494e"/><rect x="588.3" y="2" width="0.8" height="5.3" fill="#4b494e"/><rect x="591.2" y="3.5" width="0.8" height="3.8" fill="#4b494e"/><rect x="594.2" y="3.5" width="0.8" height="3.8" fill="#4b494e"/><rect x="597.2" y="3.5" width="0.8" height="3.8" fill="#4b494e"/><rect x="600.1" y="3.5" width="0.8" height="3.8" fill="#4b494e"/><text x="574.9" y="11.6" font-family="Liberation Sans" font-size="4.4" fill="#9f9da2">160</text><rect x="603.1" y="0" width="0.8" height="11" fill="#6d6b70"/><rect x="606.1" y="3.5" width="0.8" height="3.8" fill="#4b494e"/><rect x="609.0" y="3.5" width="0.8" height="3.8" fill="#4b494e"/><rect x="612.0" y="3.5" width="0.8" height="3.8" fill="#4b494e"/><rect x="615.0" y="3.5" width="0.8" height="3.8" fill="#4b494e"/><rect x="618.0" y="2" width="0.8" height="5.3" fill="#4b494e"/><rect x="620.9" y="3.5" width="0.8" height="3.8" fill="#4b494e"/><rect x="623.9" y="3.5" width="0.8" height="3.8" fill="#4b494e"/><rect x="626.9" y="3.5" width="0.8" height="3.8" fill="#4b494e"/><rect x="629.8" y="3.5" width="0.8" height="3.8" fill="#4b494e"/><text x="604.6" y="11.6" font-family="Liberation Sans" font-size="4.4" fill="#9f9da2">165</text><rect x="632.8" y="0" width="0.8" height="11" fill="#6d6b70"/><rect x="635.8" y="3.5" width="0.8" height="3.8" fill="#4b494e"/><rect x="638.7" y="3.5" width="0.8" height="3.8" fill="#4b494e"/><rect x="641.7" y="3.5" width="0.8" height="3.8" fill="#4b494e"/><rect x="644.7" y="3.5" width="0.8" height="3.8" fill="#4b494e"/><rect x="647.7" y="2" width="0.8" height="5.3" fill="#4b494e"/><rect x="650.6" y="3.5" width="0.8" height="3.8" fill="#4b494e"/><rect x="653.6" y="3.5" width="0.8" height="3.8" fill="#4b494e"/><rect x="656.6" y="3.5" width="0.8" height="3.8" fill="#4b494e"/><rect x="659.5" y="3.5" width="0.8" height="3.8" fill="#4b494e"/><text x="634.3" y="11.6" font-family="Liberation Sans" font-size="4.4" fill="#9f9da2">170</text><rect x="662.5" y="0" width="0.8" height="11" fill="#6d6b70"/><rect x="665.5" y="3.5" width="0.8" height="3.8" fill="#4b494e"/><rect x="668.4" y="3.5" width="0.8" height="3.8" fill="#4b494e"/><rect x="671.4" y="3.5" width="0.8" height="3.8" fill="#4b494e"/><rect x="674.4" y="3.5" width="0.8" height="3.8" fill="#4b494e"/><rect x="677.4" y="2" width="0.8" height="5.3" fill="#4b494e"/><rect x="680.3" y="3.5" width="0.8" height="3.8" fill="#4b494e"/><rect x="683.3" y="3.5" width="0.8" height="3.8" fill="#4b494e"/><rect x="686.3" y="3.5" width="0.8" height="3.8" fill="#4b494e"/><rect x="689.2" y="3.5" width="0.8" height="3.8" fill="#4b494e"/><text x="664.0" y="11.6" font-family="Liberation Sans" font-size="4.4" fill="#9f9da2">175</text><rect x="692.2" y="0" width="0.8" height="11" fill="#6d6b70"/><rect x="695.2" y="3.5" width="0.8" height="3.8" fill="#4b494e"/><rect x="698.1" y="3.5" width="0.8" height="3.8" fill="#4b494e"/><rect x="701.1" y="3.5" width="0.8" height="3.8" fill="#4b494e"/><rect x="704.1" y="3.5" width="0.8" height="3.8" fill="#4b494e"/><rect x="707.1" y="2" width="0.8" height="5.3" fill="#4b494e"/><rect x="710.0" y="3.5" width="0.8" height="3.8" fill="#4b494e"/><rect x="713.0" y="3.5" width="0.8" height="3.8" fill="#4b494e"/><text x="693.7" y="11.6" font-family="Liberation Sans" font-size="4.4" fill="#9f9da2">180</text></svg>
<svg style="left:57.5px;top:79.8px;" width="9.1" height="443" viewBox="0 0 9.1 443"><rect x="0" y="25.7" width="9.1" height="0.8" fill="#6d6b70"/><rect x="6.6" y="28.7" width="2.5" height="0.8" fill="#4b494e"/><rect x="6.6" y="31.6" width="2.5" height="0.8" fill="#4b494e"/><rect x="6.6" y="34.5" width="2.5" height="0.8" fill="#4b494e"/><rect x="6.6" y="37.5" width="2.5" height="0.8" fill="#4b494e"/><rect x="5.4" y="40.5" width="3.7" height="0.8" fill="#4b494e"/><rect x="6.6" y="43.4" width="2.5" height="0.8" fill="#4b494e"/><rect x="6.6" y="46.4" width="2.5" height="0.8" fill="#4b494e"/><rect x="6.6" y="49.3" width="2.5" height="0.8" fill="#4b494e"/><rect x="6.6" y="52.3" width="2.5" height="0.8" fill="#4b494e"/><text transform="translate(5.6 19.2) rotate(-90)" font-family="Liberation Sans" font-size="4.8" fill="#d0ced3">0</text><rect x="0" y="55.2" width="9.1" height="0.8" fill="#6d6b70"/><rect x="6.6" y="58.1" width="2.5" height="0.8" fill="#4b494e"/><rect x="6.6" y="61.1" width="2.5" height="0.8" fill="#4b494e"/><rect x="6.6" y="64.0" width="2.5" height="0.8" fill="#4b494e"/><rect x="6.6" y="67.0" width="2.5" height="0.8" fill="#4b494e"/><rect x="5.4" y="70.0" width="3.7" height="0.8" fill="#4b494e"/><rect x="6.6" y="72.9" width="2.5" height="0.8" fill="#4b494e"/><rect x="6.6" y="75.9" width="2.5" height="0.8" fill="#4b494e"/><rect x="6.6" y="78.8" width="2.5" height="0.8" fill="#4b494e"/><rect x="6.6" y="81.8" width="2.5" height="0.8" fill="#4b494e"/><text transform="translate(5.6 48.7) rotate(-90)" font-family="Liberation Sans" font-size="4.8" fill="#d0ced3">5</text><rect x="0" y="84.7" width="9.1" height="0.8" fill="#6d6b70"/><rect x="6.6" y="87.6" width="2.5" height="0.8" fill="#4b494e"/><rect x="6.6" y="90.6" width="2.5" height="0.8" fill="#4b494e"/><rect x="6.6" y="93.5" width="2.5" height="0.8" fill="#4b494e"/><rect x="6.6" y="96.5" width="2.5" height="0.8" fill="#4b494e"/><rect x="5.4" y="99.5" width="3.7" height="0.8" fill="#4b494e"/><rect x="6.6" y="102.4" width="2.5" height="0.8" fill="#4b494e"/><rect x="6.6" y="105.4" width="2.5" height="0.8" fill="#4b494e"/><rect x="6.6" y="108.3" width="2.5" height="0.8" fill="#4b494e"/><rect x="6.6" y="111.3" width="2.5" height="0.8" fill="#4b494e"/><text transform="translate(5.6 78.2) rotate(-90)" font-family="Liberation Sans" font-size="4.8" fill="#d0ced3">10</text><rect x="0" y="114.2" width="9.1" height="0.8" fill="#6d6b70"/><rect x="6.6" y="117.1" width="2.5" height="0.8" fill="#4b494e"/><rect x="6.6" y="120.1" width="2.5" height="0.8" fill="#4b494e"/><rect x="6.6" y="123.0" width="2.5" height="0.8" fill="#4b494e"/><rect x="6.6" y="126.0" width="2.5" height="0.8" fill="#4b494e"/><rect x="5.4" y="128.9" width="3.7" height="0.8" fill="#4b494e"/><rect x="6.6" y="131.9" width="2.5" height="0.8" fill="#4b494e"/><rect x="6.6" y="134.9" width="2.5" height="0.8" fill="#4b494e"/><rect x="6.6" y="137.8" width="2.5" height="0.8" fill="#4b494e"/><rect x="6.6" y="140.8" width="2.5" height="0.8" fill="#4b494e"/><text transform="translate(5.6 107.7) rotate(-90)" font-family="Liberation Sans" font-size="4.8" fill="#d0ced3">15</text><rect x="0" y="143.7" width="9.1" height="0.8" fill="#6d6b70"/><rect x="6.6" y="146.6" width="2.5" height="0.8" fill="#4b494e"/><rect x="6.6" y="149.6" width="2.5" height="0.8" fill="#4b494e"/><rect x="6.6" y="152.6" width="2.5" height="0.8" fill="#4b494e"/><rect x="6.6" y="155.5" width="2.5" height="0.8" fill="#4b494e"/><rect x="5.4" y="158.4" width="3.7" height="0.8" fill="#4b494e"/><rect x="6.6" y="161.4" width="2.5" height="0.8" fill="#4b494e"/><rect x="6.6" y="164.4" width="2.5" height="0.8" fill="#4b494e"/><rect x="6.6" y="167.3" width="2.5" height="0.8" fill="#4b494e"/><rect x="6.6" y="170.2" width="2.5" height="0.8" fill="#4b494e"/><text transform="translate(5.6 137.2) rotate(-90)" font-family="Liberation Sans" font-size="4.8" fill="#d0ced3">20</text><rect x="0" y="173.2" width="9.1" height="0.8" fill="#6d6b70"/><rect x="6.6" y="176.1" width="2.5" height="0.8" fill="#4b494e"/><rect x="6.6" y="179.1" width="2.5" height="0.8" fill="#4b494e"/><rect x="6.6" y="182.1" width="2.5" height="0.8" fill="#4b494e"/><rect x="6.6" y="185.0" width="2.5" height="0.8" fill="#4b494e"/><rect x="5.4" y="187.9" width="3.7" height="0.8" fill="#4b494e"/><rect x="6.6" y="190.9" width="2.5" height="0.8" fill="#4b494e"/><rect x="6.6" y="193.8" width="2.5" height="0.8" fill="#4b494e"/><rect x="6.6" y="196.8" width="2.5" height="0.8" fill="#4b494e"/><rect x="6.6" y="199.8" width="2.5" height="0.8" fill="#4b494e"/><text transform="translate(5.6 166.7) rotate(-90)" font-family="Liberation Sans" font-size="4.8" fill="#d0ced3">25</text><rect x="0" y="202.7" width="9.1" height="0.8" fill="#6d6b70"/><rect x="6.6" y="205.6" width="2.5" height="0.8" fill="#4b494e"/><rect x="6.6" y="208.6" width="2.5" height="0.8" fill="#4b494e"/><rect x="6.6" y="211.6" width="2.5" height="0.8" fill="#4b494e"/><rect x="6.6" y="214.5" width="2.5" height="0.8" fill="#4b494e"/><rect x="5.4" y="217.4" width="3.7" height="0.8" fill="#4b494e"/><rect x="6.6" y="220.4" width="2.5" height="0.8" fill="#4b494e"/><rect x="6.6" y="223.3" width="2.5" height="0.8" fill="#4b494e"/><rect x="6.6" y="226.3" width="2.5" height="0.8" fill="#4b494e"/><rect x="6.6" y="229.2" width="2.5" height="0.8" fill="#4b494e"/><text transform="translate(5.6 196.2) rotate(-90)" font-family="Liberation Sans" font-size="4.8" fill="#d0ced3">30</text><rect x="0" y="232.2" width="9.1" height="0.8" fill="#6d6b70"/><rect x="6.6" y="235.1" width="2.5" height="0.8" fill="#4b494e"/><rect x="6.6" y="238.1" width="2.5" height="0.8" fill="#4b494e"/><rect x="6.6" y="241.1" width="2.5" height="0.8" fill="#4b494e"/><rect x="6.6" y="244.0" width="2.5" height="0.8" fill="#4b494e"/><rect x="5.4" y="246.9" width="3.7" height="0.8" fill="#4b494e"/><rect x="6.6" y="249.9" width="2.5" height="0.8" fill="#4b494e"/><rect x="6.6" y="252.8" width="2.5" height="0.8" fill="#4b494e"/><rect x="6.6" y="255.8" width="2.5" height="0.8" fill="#4b494e"/><rect x="6.6" y="258.8" width="2.5" height="0.8" fill="#4b494e"/><text transform="translate(5.6 225.7) rotate(-90)" font-family="Liberation Sans" font-size="4.8" fill="#d0ced3">35</text><rect x="0" y="261.7" width="9.1" height="0.8" fill="#6d6b70"/><rect x="6.6" y="264.6" width="2.5" height="0.8" fill="#4b494e"/><rect x="6.6" y="267.6" width="2.5" height="0.8" fill="#4b494e"/><rect x="6.6" y="270.6" width="2.5" height="0.8" fill="#4b494e"/><rect x="6.6" y="273.5" width="2.5" height="0.8" fill="#4b494e"/><rect x="5.4" y="276.4" width="3.7" height="0.8" fill="#4b494e"/><rect x="6.6" y="279.4" width="2.5" height="0.8" fill="#4b494e"/><rect x="6.6" y="282.3" width="2.5" height="0.8" fill="#4b494e"/><rect x="6.6" y="285.3" width="2.5" height="0.8" fill="#4b494e"/><rect x="6.6" y="288.2" width="2.5" height="0.8" fill="#4b494e"/><text transform="translate(5.6 255.2) rotate(-90)" font-family="Liberation Sans" font-size="4.8" fill="#d0ced3">40</text><rect x="0" y="291.2" width="9.1" height="0.8" fill="#6d6b70"/><rect x="6.6" y="294.1" width="2.5" height="0.8" fill="#4b494e"/><rect x="6.6" y="297.1" width="2.5" height="0.8" fill="#4b494e"/><rect x="6.6" y="300.1" width="2.5" height="0.8" fill="#4b494e"/><rect x="6.6" y="303.0" width="2.5" height="0.8" fill="#4b494e"/><rect x="5.4" y="305.9" width="3.7" height="0.8" fill="#4b494e"/><rect x="6.6" y="308.9" width="2.5" height="0.8" fill="#4b494e"/><rect x="6.6" y="311.8" width="2.5" height="0.8" fill="#4b494e"/><rect x="6.6" y="314.8" width="2.5" height="0.8" fill="#4b494e"/><rect x="6.6" y="317.8" width="2.5" height="0.8" fill="#4b494e"/><text transform="translate(5.6 284.7) rotate(-90)" font-family="Liberation Sans" font-size="4.8" fill="#d0ced3">45</text><rect x="0" y="320.7" width="9.1" height="0.8" fill="#6d6b70"/><rect x="6.6" y="323.6" width="2.5" height="0.8" fill="#4b494e"/><rect x="6.6" y="326.6" width="2.5" height="0.8" fill="#4b494e"/><rect x="6.6" y="329.6" width="2.5" height="0.8" fill="#4b494e"/><rect x="6.6" y="332.5" width="2.5" height="0.8" fill="#4b494e"/><rect x="5.4" y="335.4" width="3.7" height="0.8" fill="#4b494e"/><rect x="6.6" y="338.4" width="2.5" height="0.8" fill="#4b494e"/><rect x="6.6" y="341.3" width="2.5" height="0.8" fill="#4b494e"/><rect x="6.6" y="344.3" width="2.5" height="0.8" fill="#4b494e"/><rect x="6.6" y="347.2" width="2.5" height="0.8" fill="#4b494e"/><text transform="translate(5.6 314.2) rotate(-90)" font-family="Liberation Sans" font-size="4.8" fill="#d0ced3">50</text><rect x="0" y="350.2" width="9.1" height="0.8" fill="#6d6b70"/><rect x="6.6" y="353.1" width="2.5" height="0.8" fill="#4b494e"/><rect x="6.6" y="356.1" width="2.5" height="0.8" fill="#4b494e"/><rect x="6.6" y="359.1" width="2.5" height="0.8" fill="#4b494e"/><rect x="6.6" y="362.0" width="2.5" height="0.8" fill="#4b494e"/><rect x="5.4" y="364.9" width="3.7" height="0.8" fill="#4b494e"/><rect x="6.6" y="367.9" width="2.5" height="0.8" fill="#4b494e"/><rect x="6.6" y="370.8" width="2.5" height="0.8" fill="#4b494e"/><rect x="6.6" y="373.8" width="2.5" height="0.8" fill="#4b494e"/><rect x="6.6" y="376.8" width="2.5" height="0.8" fill="#4b494e"/><text transform="translate(5.6 343.7) rotate(-90)" font-family="Liberation Sans" font-size="4.8" fill="#d0ced3">55</text><rect x="0" y="379.7" width="9.1" height="0.8" fill="#6d6b70"/><rect x="6.6" y="382.6" width="2.5" height="0.8" fill="#4b494e"/><rect x="6.6" y="385.6" width="2.5" height="0.8" fill="#4b494e"/><rect x="6.6" y="388.6" width="2.5" height="0.8" fill="#4b494e"/><rect x="6.6" y="391.5" width="2.5" height="0.8" fill="#4b494e"/><rect x="5.4" y="394.4" width="3.7" height="0.8" fill="#4b494e"/><rect x="6.6" y="397.4" width="2.5" height="0.8" fill="#4b494e"/><rect x="6.6" y="400.3" width="2.5" height="0.8" fill="#4b494e"/><rect x="6.6" y="403.3" width="2.5" height="0.8" fill="#4b494e"/><rect x="6.6" y="406.2" width="2.5" height="0.8" fill="#4b494e"/><text transform="translate(5.6 373.2) rotate(-90)" font-family="Liberation Sans" font-size="4.8" fill="#d0ced3">60</text><rect x="0" y="409.2" width="9.1" height="0.8" fill="#6d6b70"/><rect x="6.6" y="412.1" width="2.5" height="0.8" fill="#4b494e"/><rect x="6.6" y="415.1" width="2.5" height="0.8" fill="#4b494e"/><rect x="6.6" y="418.1" width="2.5" height="0.8" fill="#4b494e"/><rect x="6.6" y="421.0" width="2.5" height="0.8" fill="#4b494e"/><rect x="5.4" y="423.9" width="3.7" height="0.8" fill="#4b494e"/><rect x="6.6" y="426.9" width="2.5" height="0.8" fill="#4b494e"/><rect x="6.6" y="429.8" width="2.5" height="0.8" fill="#4b494e"/><rect x="6.6" y="432.8" width="2.5" height="0.8" fill="#4b494e"/><rect x="6.6" y="435.7" width="2.5" height="0.8" fill="#4b494e"/><text transform="translate(5.6 402.7) rotate(-90)" font-family="Liberation Sans" font-size="4.8" fill="#d0ced3">65</text><rect x="0" y="438.7" width="9.1" height="0.8" fill="#6d6b70"/><rect x="6.6" y="441.7" width="2.5" height="0.8" fill="#4b494e"/><text transform="translate(5.6 432.2) rotate(-90)" font-family="Liberation Sans" font-size="4.8" fill="#d0ced3">70</text><rect x="6.6" y="22.8" width="2.5" height="0.8" fill="#4b494e"/><rect x="6.6" y="19.8" width="2.5" height="0.8" fill="#4b494e"/><rect x="6.6" y="16.9" width="2.5" height="0.8" fill="#4b494e"/><rect x="6.6" y="13.9" width="2.5" height="0.8" fill="#4b494e"/><rect x="6.6" y="11.0" width="2.5" height="0.8" fill="#4b494e"/><rect x="6.6" y="8.0" width="2.5" height="0.8" fill="#4b494e"/><rect x="6.6" y="5.1" width="2.5" height="0.8" fill="#4b494e"/><rect x="6.6" y="2.1" width="2.5" height="0.8" fill="#4b494e"/></svg>
<svg style="left:772px;top:73px" width="16" height="16" viewBox="-8 -8 16 16"><path d="M-2.5 1.4 L0 -1.4 L2.5 1.4" fill="none" stroke="#c9c7cc" stroke-width="1.2" stroke-linecap="round" stroke-linejoin="round"/></svg>
<svg style="left:772px;top:509px" width="16" height="16" viewBox="-8 -8 16 16"><path d="M-2.5 -1.4 L0 1.4 L2.5 -1.4" fill="none" stroke="#c9c7cc" stroke-width="1.2" stroke-linecap="round" stroke-linejoin="round"/></svg>
<svg style="left:768px;top:511px;" width="7" height="7" viewBox="0 0 7 7"><path d="M6 0.5 C6 4 4 6 0.5 6 L6 6Z" fill="#e6e4e9"/></svg>
<div style="left:58px;top:523px;width:729px;height:13.5px;background:#4c4a4f;"></div>
<div style="left:58px;top:523px;width:42px;height:13.5px;background:#48464b;"></div>
<div class="t ss" style="left:63.5px;top:525.3px;font-size:8.8px;color:#dddbe0;letter-spacing:-0.75px;">400%</div>
<div style="left:101.5px;top:524px;width:12px;height:12px;background:#504e53;"></div>
<svg style="left:99.5px;top:522.5px" width="16" height="16" viewBox="-8 -8 16 16"><path d="M-2.5 -1.4 L0 1.4 L2.5 -1.4" fill="none" stroke="#e6e6e6" stroke-width="1.4" stroke-linecap="round" stroke-linejoin="round"/></svg>
<svg style="left:120px;top:526px;" width="10" height="9" viewBox="0 0 10 9"><rect x="1" y="1" width="1.3" height="7" fill="#6b696e"/><path d="M8 1 L3.4 4.5 L8 8Z" fill="#6b696e"/></svg>
<svg style="left:134px;top:526px;" width="8" height="9" viewBox="0 0 8 9"><path d="M6.4 1 L1.8 4.5 L6.4 8Z" fill="#6b696e"/></svg>
<div style="left:146px;top:524px;width:33px;height:12px;background:#48464b;"></div>
<div class="t ss" style="left:149.5px;top:525.5px;font-size:8.6px;color:#dddbe0;">1</div>
<div style="left:179.5px;top:524px;width:12px;height:12px;background:#504e53;"></div>
<svg style="left:177.5px;top:522.5px" width="16" height="16" viewBox="-8 -8 16 16"><path d="M-2.5 -1.4 L0 1.4 L2.5 -1.4" fill="none" stroke="#e6e6e6" stroke-width="1.4" stroke-linecap="round" stroke-linejoin="round"/></svg>
<svg style="left:198px;top:526px;" width="8" height="9" viewBox="0 0 8 9"><path d="M1.6 1 L6.2 4.5 L1.6 8Z" fill="#6b696e"/></svg>
<svg style="left:210px;top:526px;" width="10" height="9" viewBox="0 0 10 9"><path d="M2 1 L6.6 4.5 L2 8Z" fill="#6b696e"/><rect x="7.6" y="1" width="1.3" height="7" fill="#6b696e"/></svg>
<div class="t sf" style="left:295px;top:525px;font-size:9px;color:#cfcdd2;letter-spacing:0.6px;">旋转</div>
<svg style="left:385px;top:526px;" width="8" height="9" viewBox="0 0 8 9"><path d="M1.6 0.8 L6.6 4.5 L1.6 8.2Z" fill="#e6e4e9"/></svg>
<svg style="left:394px;top:522.5px" width="16" height="16" viewBox="-8 -8 16 16"><path d="M1.3 -2.5 L-1.3 0 L1.3 2.5" fill="none" stroke="#c9c7cc" stroke-width="1.1" stroke-linecap="round" stroke-linejoin="round"/></svg>
<div style="left:396px;top:523px;width:378px;height:13.5px;background:#4a484d;"></div>
<svg style="left:394px;top:522.5px" width="16" height="16" viewBox="-8 -8 16 16"><path d="M1.3 -2.5 L-1.3 0 L1.3 2.5" fill="none" stroke="#c9c7cc" stroke-width="1.1" stroke-linecap="round" stroke-linejoin="round"/></svg>
<div style="left:573.5px;top:524.5px;width:20.5px;height:10px;background:#5f5d62;border-radius:5px;"></div>
<svg style="left:758.5px;top:522.5px" width="16" height="16" viewBox="-8 -8 16 16"><path d="M-1.3 -2.5 L1.3 0 L-1.3 2.5" fill="none" stroke="#c9c7cc" stroke-width="1.1" stroke-linecap="round" stroke-linejoin="round"/></svg>
<div style="left:654px;top:515px;width:64.5px;height:19.5px;background:#fdfdfe;border:1px solid #b9c4d2;"></div>
<div class="t ss" style="left:658.5px;top:518px;font-size:10.5px;color:#1d6cc2;">英</div>
<svg style="left:672px;top:517.5px;" width="14" height="14" viewBox="0 0 14 14"><path d="M8.6 1.6 A5.6 5.6 0 1 0 12.4 9.4 A4.8 4.8 0 0 1 8.6 1.6Z" fill="#1d6cc2"/></svg>
<svg style="left:688px;top:520px;" width="9" height="10" viewBox="0 0 9 10"><circle cx="2.6" cy="3" r="1.1" fill="#1d6cc2"/><path d="M5.6 5 c1 0.6 1 2 -0.4 3" stroke="#1d6cc2" stroke-width="1.2" fill="none"/></svg>
<svg style="left:699.5px;top:517.5px;" width="15" height="15" viewBox="0 0 15 15"><circle cx="7.5" cy="7.5" r="3.4" fill="none" stroke="#1d6cc2" stroke-width="1.7"/><g stroke="#1d6cc2" stroke-width="2"><path d="M7.5 1.4 v2 M7.5 11.6 v2 M1.4 7.5 h2 M11.6 7.5 h2 M3.2 3.2 l1.4 1.4 M10.4 10.4 l1.4 1.4 M3.2 11.8 l1.4 -1.4 M10.4 4.6 l1.4 -1.4"/></g></svg>
<div style="left:0px;top:536px;width:1000px;height:5px;background:#060607;"></div>
<div style="left:30px;top:536.3px;width:225px;height:4.7px;background:#2f2e31;"></div>
<div style="left:418px;top:536.3px;width:30px;height:4.7px;background:#3a393c;"></div>
<div style="left:482px;top:536.3px;width:32px;height:4.7px;background:#c4661c;"></div>
</div>
</body></html>
